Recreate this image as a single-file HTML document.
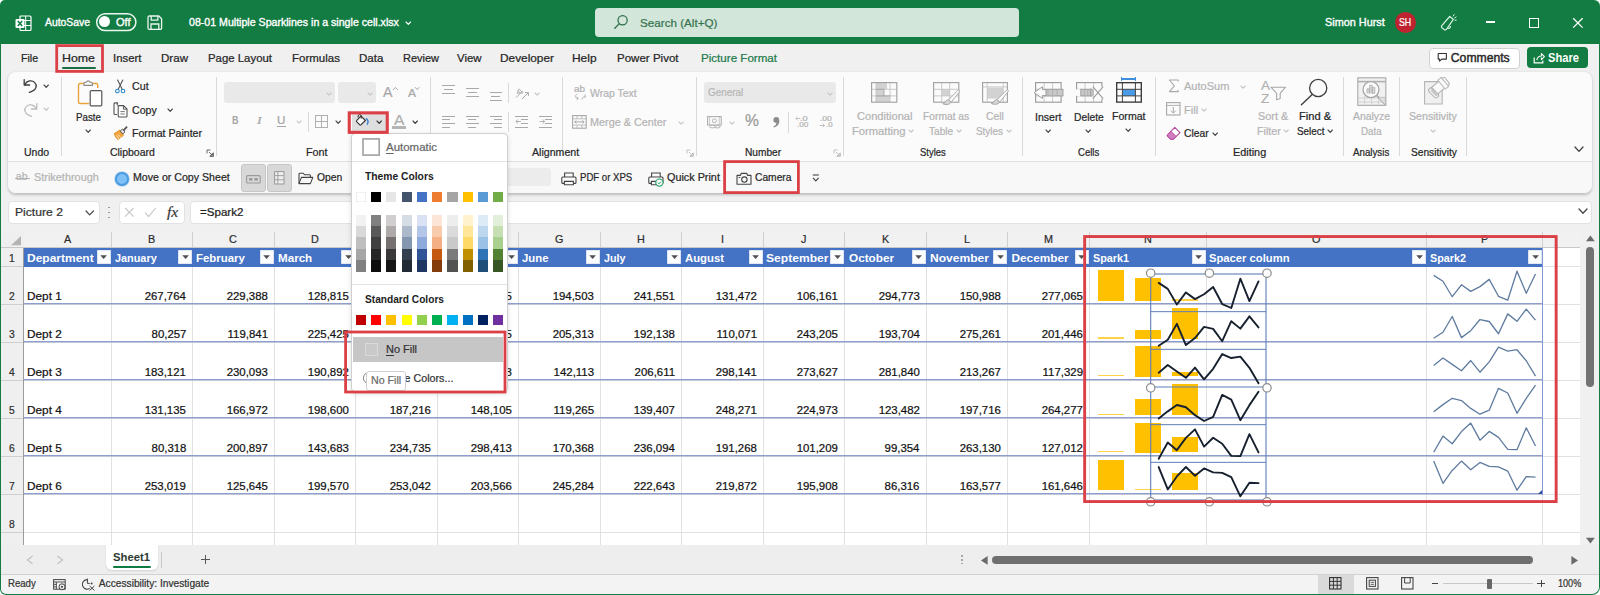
<!DOCTYPE html>
<html lang="en"><head><meta charset="utf-8"><title>Excel - Multiple Sparklines in a single cell</title>
<style>
html,body{margin:0;padding:0;background:#fff;}
body{width:1600px;height:595px;position:relative;overflow:hidden;font-family:"Liberation Sans",sans-serif;}
.a{position:absolute;display:block;}
.t{position:absolute;white-space:nowrap;display:block;-webkit-text-stroke:0.22px currentColor;}
svg{overflow:visible;}
u{text-decoration-thickness:1px;text-underline-offset:1.5px;}
</style></head><body>
<div class="a" style="left:0;top:0;width:1600px;height:595px;background:#127c42;border-radius:5px 6px 8px 6px;"></div>
<div class="a" style="left:1px;top:44px;width:1597.800px;height:549.500px;background:#f0f0f0;border-radius:0 0 7px 5px;"></div>
<svg class="a" style="left:14.6px;top:14.6px;" width="17" height="17" viewBox="0 0 17 17"><rect x="5" y="1" width="11" height="14.5" rx="1" fill="none" stroke="#fff" stroke-width="1.2"/>
<path d="M5.5 5.5H16M5.5 10.5H16M10.7 1v14" stroke="#fff" stroke-width="1"/>
<rect x="0.5" y="4" width="9" height="9" rx="1" fill="#fff"/>
<path d="M2.8 6 L7.2 11 M7.2 6 L2.8 11" stroke="#127c42" stroke-width="1.5"/></svg>
<span class="t" style="top:17.11px;font-size:10.5px;line-height:10.5px;color:#fff;left:44.6px;transform-origin:0 0;transform:scaleX(0.988);-webkit-text-stroke:0.35px #fff;">AutoSave</span>
<svg class="a" style="left:95px;top:11.6px;" width="43" height="21" viewBox="0 0 43 21"><rect x="1.700" y="1.700" width="39.200" height="16.900" rx="8.450" fill="none" stroke="#eaf6ef" stroke-width="1.500"/></svg>
<div class="a" style="left:98.600px;top:16.200px;width:11.200px;height:11.200px;background:#fff;border-radius:50%;"></div>
<span class="t" style="top:17.11px;font-size:10.5px;line-height:10.5px;color:#fff;left:116.3px;transform-origin:0 0;transform:scaleX(1.050);-webkit-text-stroke:0.35px #fff;">Off</span>
<svg class="a" style="left:147px;top:15.2px;" width="16" height="16" viewBox="0 0 16 16"><path d="M1 2.300a1.300 1.300 0 0 1 1.300-1.300h9.500L14.600 3.800v9.200a1.300 1.300 0 0 1-1.300 1.300h-11A1.300 1.300 0 0 1 1 13z" fill="none" stroke="#eaf6ef" stroke-width="1.300"/>
<path d="M4.200 1.200v4h6.600V1.200M4 14.200v-5.200h7.800v5.200" fill="none" stroke="#eaf6ef" stroke-width="1.300"/></svg>
<span class="t" style="top:17.11px;font-size:10.5px;line-height:10.5px;color:#fff;left:188.8px;transform-origin:0 0;transform:scaleX(1.010);-webkit-text-stroke:0.35px #fff;">08-01 Multiple Sparklines in a single cell.xlsx</span>
<svg class="a" style="left:404.7px;top:21.1px;" width="6.6" height="4.4" viewBox="0 0 6.6 4.4"><path d="M1 1 L3.3 3.4 L5.6 1" fill="none" stroke="#fff" stroke-width="1.1" stroke-linecap="round" stroke-linejoin="round"/></svg>
<div class="a" style="left:595px;top:8px;width:424px;height:29px;background:#d2e6da;border-radius:4px;"></div>
<svg class="a" style="left:613px;top:14px;" width="16" height="16" viewBox="0 0 16 16"><circle cx="9.6" cy="6.2" r="4.6" fill="none" stroke="#2a6b47" stroke-width="1.2"/><path d="M6.3 9.6 L1.8 14.2" stroke="#2a6b47" stroke-width="1.3" stroke-linecap="round"/></svg>
<span class="t" style="top:17.48px;font-size:11.6px;line-height:11.6px;color:#37734f;left:639.5px;transform-origin:0 0;transform:scaleX(1.006);">Search (Alt+Q)</span>
<span class="t" style="top:17.11px;font-size:10.5px;line-height:10.5px;color:#fff;left:1324.8px;transform-origin:0 0;transform:scaleX(1.035);-webkit-text-stroke:0.35px #fff;">Simon Hurst</span>
<div class="a" style="left:1394.6px;top:11.8px;width:21.6px;height:21.6px;background:#bf2330;border-radius:50%;"></div>
<span class="t" style="top:16.91px;font-size:10.5px;line-height:10.5px;color:#fff;left:1399.2px;transform-origin:0 0;transform:scaleX(0.836);">SH</span>
<svg class="a" style="left:1440px;top:13px;" width="18" height="19" viewBox="0 0 18 19"><path d="M9.700 3.500 L13.300 6.300 L6.400 16.500 Q5.200 17.300 4 16.400 L1.900 14.700 Q1 13.600 1.800 12.600 Z" fill="none" stroke="#d9f5e4" stroke-width="1.200" stroke-linejoin="round"/>
<path d="M7.600 14.800 a1.600 1.600 0 0 0 2.600 -1.800" fill="none" stroke="#d9f5e4" stroke-width="1.100"/>
<path d="M13.300 3l.9-1.500M14.800 4.800l1.300-.8M14.900 7.200h1.300" stroke="#d9f5e4" stroke-width="1" stroke-linecap="round"/></svg>
<div class="a" style="left:1485.8px;top:21.4px;width:9.4px;height:1.2px;background:#fff;"></div>
<div class="a" style="left:1529.4px;top:18.2px;width:8px;height:8px;border:1.2px solid #fff;"></div>
<svg class="a" style="left:1572px;top:17px;" width="12" height="12" viewBox="0 0 12 12"><path d="M1.2 1.2L10.6 10.6M10.6 1.2L1.2 10.6" stroke="#fff" stroke-width="1.3"/></svg>
<span class="t" style="top:52.81px;font-size:10.5px;line-height:10.5px;color:#262626;left:20.7px;transform-origin:0 0;transform:scaleX(1.011);">File</span>
<span class="t" style="top:52.81px;font-size:10.5px;line-height:10.5px;color:#262626;left:62.3px;transform-origin:0 0;transform:scaleX(1.178);">Home</span>
<span class="t" style="top:52.81px;font-size:10.5px;line-height:10.5px;color:#262626;left:113.4px;transform-origin:0 0;transform:scaleX(1.085);">Insert</span>
<span class="t" style="top:52.81px;font-size:10.5px;line-height:10.5px;color:#262626;left:161.3px;transform-origin:0 0;transform:scaleX(1.102);">Draw</span>
<span class="t" style="top:52.81px;font-size:10.5px;line-height:10.5px;color:#262626;left:208.2px;transform-origin:0 0;transform:scaleX(1.085);">Page Layout</span>
<span class="t" style="top:52.81px;font-size:10.5px;line-height:10.5px;color:#262626;left:292.4px;transform-origin:0 0;transform:scaleX(1.095);">Formulas</span>
<span class="t" style="top:52.81px;font-size:10.5px;line-height:10.5px;color:#262626;left:359.2px;transform-origin:0 0;transform:scaleX(1.100);">Data</span>
<span class="t" style="top:52.81px;font-size:10.5px;line-height:10.5px;color:#262626;left:403px;transform-origin:0 0;transform:scaleX(1.046);">Review</span>
<span class="t" style="top:52.81px;font-size:10.5px;line-height:10.5px;color:#262626;left:457px;transform-origin:0 0;transform:scaleX(1.086);">View</span>
<span class="t" style="top:52.81px;font-size:10.5px;line-height:10.5px;color:#262626;left:499.5px;transform-origin:0 0;transform:scaleX(1.128);">Developer</span>
<span class="t" style="top:52.81px;font-size:10.5px;line-height:10.5px;color:#262626;left:572px;transform-origin:0 0;transform:scaleX(1.135);">Help</span>
<span class="t" style="top:52.81px;font-size:10.5px;line-height:10.5px;color:#262626;left:616.5px;transform-origin:0 0;transform:scaleX(1.098);">Power Pivot</span>
<span class="t" style="top:52.81px;font-size:10.5px;line-height:10.5px;color:#237a4b;left:700.5px;transform-origin:0 0;transform:scaleX(1.104);">Picture Format</span>
<div class="a" style="left:61.8px;top:66.9px;width:34px;height:1.9px;background:#1b6e42;border-radius:1px;"></div>
<div class="a" style="left:1429.4px;top:47.6px;width:88.4px;height:19.6px;background:#fff;border:1px solid #d1d1d1;border-radius:4px;"></div>
<svg class="a" style="left:1436.5px;top:52px;" width="11" height="11" viewBox="0 0 11 11"><path d="M1.2 1.5h8.2v5.6H4.8L2.6 9.2V7.1H1.2z" fill="none" stroke="#333" stroke-width="1.1" stroke-linejoin="round"/></svg>
<span class="t" style="top:52.07px;font-size:12.2px;line-height:12.2px;color:#2a2a2a;left:1450.8px;transform-origin:0 0;-webkit-text-stroke:0.45px #2a2a2a;">Comments</span>
<div class="a" style="left:1527px;top:47.4px;width:61.2px;height:21px;background:#127c42;border-radius:4px;"></div>
<svg class="a" style="left:1533.2px;top:51.6px;" width="12" height="12" viewBox="0 0 12 12"><path d="M1.200 5.400v5.400h8.600V8.600" fill="none" stroke="#fff" stroke-width="1.200"/><path d="M3.800 8.200c.4-2.800 2.200-4.200 4.600-4.200V1.600L11.400 4.600 8.400 7.600V5.600" fill="none" stroke="#fff" stroke-width="1.100" stroke-linejoin="round"/></svg>
<span class="t" style="top:52.07px;font-size:12.2px;line-height:12.2px;color:#fff;font-weight:700;-webkit-text-stroke:0;left:1548.3px;transform-origin:0 0;transform:scaleX(0.914);">Share</span>
<div class="a" style="left:8px;top:72px;width:1584px;height:121.4px;background:#fbfbfb;border-radius:8px;box-shadow:0 1.5px 3px rgba(0,0,0,0.22);"></div>
<div class="a" style="left:8px;top:161.8px;width:1584px;height:31.6px;background:#f8f8f8;border-radius:0 0 8px 8px;"></div>
<div class="a" style="left:8px;top:161px;width:1584px;height:1px;background:#dedede;"></div>
<svg class="a" style="left:22px;top:78px;" width="17" height="16" viewBox="0 0 17 16"><path d="M2.2 1.6v5.4h5.4" fill="none" stroke="#3b3b3b" stroke-width="1.3" stroke-linecap="round" stroke-linejoin="round"/><path d="M2.6 6.6 C5 2.6 9.8 1.6 12.6 4.4 C15.4 7.2 14.4 11.4 10.4 13.2 L7.4 14.4" fill="none" stroke="#3b3b3b" stroke-width="1.3" stroke-linecap="round"/></svg>
<svg class="a" style="left:42.8px;top:84.45px;" width="6.4" height="4.3" viewBox="0 0 6.4 4.3"><path d="M1 1 L3.2 3.3 L5.4 1" fill="none" stroke="#444" stroke-width="1.1" stroke-linecap="round" stroke-linejoin="round"/></svg>
<svg class="a" style="left:22px;top:101.5px;" width="17" height="16" viewBox="0 0 17 16"><path d="M14.8 1.6v5.4H9.4" fill="none" stroke="#bdbdbd" stroke-width="1.3" stroke-linecap="round" stroke-linejoin="round"/><path d="M14.4 6.6 C12 2.6 7.2 1.6 4.4 4.4 C1.6 7.2 2.6 11.4 6.6 13.2 L9.6 14.4" fill="none" stroke="#bdbdbd" stroke-width="1.3" stroke-linecap="round"/></svg>
<svg class="a" style="left:42.8px;top:107.45px;" width="6.4" height="4.3" viewBox="0 0 6.4 4.3"><path d="M1 1 L3.2 3.3 L5.4 1" fill="none" stroke="#c4c4c4" stroke-width="1.1" stroke-linecap="round" stroke-linejoin="round"/></svg>
<span class="t" style="top:147.21px;font-size:10.5px;line-height:10.5px;color:#262626;left:24px;transform-origin:0 0;">Undo</span>
<div class="a" style="left:61.2px;top:77px;width:1px;height:78.7px;background:#d9d9d9;"></div>
<svg class="a" style="left:77px;top:78.5px;" width="27" height="29" viewBox="0 0 27 29"><path d="M7 4.5H3a1.5 1.5 0 0 0-1.5 1.5v17A1.5 1.5 0 0 0 3 24.5h9" fill="none" stroke="#e8a33d" stroke-width="1.4"/>
<path d="M16 4.5h3.2a1.5 1.5 0 0 1 1.5 1.5v3" fill="none" stroke="#e8a33d" stroke-width="1.4"/>
<path d="M7 6.4V4.2a1 1 0 0 1 1-1h1.4a1.9 1.9 0 0 1 3.6 0h1.4a1 1 0 0 1 1 1v2.2z" fill="#fbfbfb" stroke="#8a8a8a" stroke-width="1.1"/>
<rect x="13.2" y="11.6" width="11.6" height="15.2" rx="1" fill="#fff" stroke="#555" stroke-width="1.2"/></svg>
<span class="t" style="top:111.71px;font-size:10.5px;line-height:10.5px;color:#262626;left:76.4px;transform-origin:0 0;transform:scaleX(0.927);">Paste</span>
<svg class="a" style="left:84.5px;top:129.15px;" width="6.4" height="4.3" viewBox="0 0 6.4 4.3"><path d="M1 1 L3.2 3.3 L5.4 1" fill="none" stroke="#444" stroke-width="1.1" stroke-linecap="round" stroke-linejoin="round"/></svg>
<svg class="a" style="left:114px;top:79px;" width="13" height="15" viewBox="0 0 13 15"><path d="M3.6 1 L8.2 10.2 M8.8 1 L4.2 10.2" stroke="#555" stroke-width="1.1" stroke-linecap="round"/>
<circle cx="3.4" cy="12" r="1.8" fill="none" stroke="#2d88c8" stroke-width="1.1"/><circle cx="9" cy="12" r="1.8" fill="none" stroke="#2d88c8" stroke-width="1.1"/></svg>
<span class="t" style="top:80.81px;font-size:10.5px;line-height:10.5px;color:#262626;left:131.6px;transform-origin:0 0;transform:scaleX(1.016);">Cut</span>
<svg class="a" style="left:112.5px;top:101.5px;" width="16" height="16" viewBox="0 0 16 16"><path d="M4.2 3.2V1.8a.9.9 0 0 1 .9-.9H1.6M4.4.9H2a1 1 0 0 0-1 1v9.6a1 1 0 0 0 1 1h2" fill="none" stroke="#555" stroke-width="1.1"/>
<path d="M5.2 3.6h5.4l3.4 3.4v7a1 1 0 0 1-1 1H6.2a1 1 0 0 1-1-1z" fill="#fff" stroke="#555" stroke-width="1.1"/><path d="M10.4 3.8V7.2h3.4" fill="none" stroke="#555" stroke-width="1"/>
<path d="M7.4 9.6h4.4M7.4 12h4.4" stroke="#777" stroke-width="1"/></svg>
<span class="t" style="top:104.61px;font-size:10.5px;line-height:10.5px;color:#262626;left:131.6px;transform-origin:0 0;transform:scaleX(1.008);">Copy</span>
<svg class="a" style="left:167.2px;top:107.65px;" width="6.4" height="4.3" viewBox="0 0 6.4 4.3"><path d="M1 1 L3.2 3.3 L5.4 1" fill="none" stroke="#444" stroke-width="1.1" stroke-linecap="round" stroke-linejoin="round"/></svg>
<svg class="a" style="left:113px;top:125.5px;" width="16" height="15" viewBox="0 0 16 15"><path d="M1.2 7.6 L6.4 4.2 L10.6 9.2 L5.2 13.6 C3.4 12.6 2 10.6 1.2 7.6z" fill="#f2a43a" stroke="#d98a1e" stroke-width=".8"/>
<path d="M3.4 9.4l2.6 3.6M5 8.2l2.8 3.4" stroke="#fff" stroke-width=".7"/>
<path d="M7.2 4.8 L9.6 3 L12 6 L9.8 8z" fill="#e8e8e8" stroke="#555" stroke-width=".9"/>
<path d="M10.8 4.2 L13.6 1.2" stroke="#555" stroke-width="1.8" stroke-linecap="round"/></svg>
<span class="t" style="top:128.11px;font-size:10.5px;line-height:10.5px;color:#262626;left:131.6px;transform-origin:0 0;transform:scaleX(1.008);">Format Painter</span>
<span class="t" style="top:147.21px;font-size:10.5px;line-height:10.5px;color:#262626;left:109.9px;transform-origin:0 0;">Clipboard</span>
<svg class="a" style="left:206px;top:149px;" width="8" height="8" viewBox="0 0 8 8"><path d="M1 4.4V1h3.4M7.4 3.6v3.8H3.6" fill="none" stroke="#666" stroke-width="1"/><path d="M3 3l3.2 3.2M6.4 4v2.4H4" fill="none" stroke="#666" stroke-width="1"/></svg>
<div class="a" style="left:215.8px;top:77px;width:1px;height:78.7px;background:#d9d9d9;"></div>
<div class="a" style="left:224.3px;top:82px;width:110.9px;height:21.3px;background:#e9e9e9;border-radius:3px;"></div>
<svg class="a" style="left:326.3px;top:91.5px;" width="6.2" height="4.2" viewBox="0 0 6.2 4.2"><path d="M1 1 L3.1 3.2 L5.2 1" fill="none" stroke="#c8c8c8" stroke-width="1.1" stroke-linecap="round" stroke-linejoin="round"/></svg>
<div class="a" style="left:337.7px;top:82px;width:38.3px;height:21.3px;background:#e9e9e9;border-radius:3px;"></div>
<svg class="a" style="left:367.4px;top:91.5px;" width="6.2" height="4.2" viewBox="0 0 6.2 4.2"><path d="M1 1 L3.1 3.2 L5.2 1" fill="none" stroke="#c8c8c8" stroke-width="1.1" stroke-linecap="round" stroke-linejoin="round"/></svg>
<span class="t" style="top:84.43px;font-size:15.2px;line-height:15.2px;color:#a8a8a8;left:383.1px;transform-origin:0 0;transform:scaleX(0.937);">A</span>
<svg class="a" style="left:392px;top:85.6px;" width="7" height="5" viewBox="0 0 7 5"><path d="M1 4L3.4 1.4L5.8 4" fill="none" stroke="#a8a8a8" stroke-width="1"/></svg>
<span class="t" style="top:88.09px;font-size:11px;line-height:11px;color:#a8a8a8;left:407.6px;transform-origin:0 0;transform:scaleX(1.090);">A</span>
<svg class="a" style="left:414px;top:86px;" width="7" height="5" viewBox="0 0 7 5"><path d="M1 1.2L3.2 3.6L5.4 1.2" fill="none" stroke="#a8a8a8" stroke-width="1"/></svg>
<span class="t" style="top:114.89px;font-size:11px;line-height:11px;color:#a6a6a6;font-weight:700;-webkit-text-stroke:0;left:231.9px;transform-origin:0 0;transform:scaleX(0.818);">B</span>
<span class="t" style="top:114.89px;font-size:11px;line-height:11px;color:#a6a6a6;font-style:italic;left:256.8px;transform-origin:0 0;transform:scaleX(1.243);font-family:'Liberation Serif',serif;">I</span>
<span class="t" style="top:114.63px;font-size:10.6px;line-height:10.6px;color:#a6a6a6;left:277.4px;transform-origin:0 0;transform:scaleX(1.097);">U</span>
<div class="a" style="left:277.2px;top:126.1px;width:8.8px;height:1px;background:#a6a6a6;"></div>
<svg class="a" style="left:295.9px;top:120.3px;" width="6.2" height="4.2" viewBox="0 0 6.2 4.2"><path d="M1 1 L3.1 3.2 L5.2 1" fill="none" stroke="#c8c8c8" stroke-width="1.1" stroke-linecap="round" stroke-linejoin="round"/></svg>
<div class="a" style="left:308.2px;top:111.6px;width:1px;height:20.1px;background:#d9d9d9;"></div>
<svg class="a" style="left:315px;top:115.4px;" width="13" height="13" viewBox="0 0 13 13"><rect x=".5" y=".5" width="12" height="12" fill="none" stroke="#b0b0b0" stroke-width="1"/><path d="M6.5 .5v12M.5 6.5h12" stroke="#b0b0b0" stroke-width="1"/></svg>
<svg class="a" style="left:335.3px;top:120.45px;" width="6.4" height="4.3" viewBox="0 0 6.4 4.3"><path d="M1 1 L3.2 3.3 L5.4 1" fill="none" stroke="#444" stroke-width="1.1" stroke-linecap="round" stroke-linejoin="round"/></svg>
<div class="a" style="left:351.6px;top:113.4px;width:34.4px;height:17.8px;background:#dfdfdf;"></div>
<svg class="a" style="left:355px;top:113.6px;" width="15" height="13" viewBox="0 0 15 13"><path d="M6 2.200 L1.800 6.400 a1.100 1.100 0 0 0 0 1.500 l2.800 2.800 a1.100 1.100 0 0 0 1.500 0 L10.400 6.500 z" fill="#fbfbfb" stroke="#333" stroke-width="1.150" stroke-linejoin="round"/>
<path d="M6.200 4.600 V2 a1.500 1.500 0 0 0 -3 0 v1.600" fill="none" stroke="#333" stroke-width="1"/>
<path d="M11.300 4.600 c1.800 1.600 2.200 3.800 1 5.600" fill="none" stroke="#2b7cd3" stroke-width="1.300" stroke-linecap="round"/></svg>
<svg class="a" style="left:375.6px;top:120.45px;" width="6.4" height="4.3" viewBox="0 0 6.4 4.3"><path d="M1 1 L3.2 3.3 L5.4 1" fill="none" stroke="#333" stroke-width="1.1" stroke-linecap="round" stroke-linejoin="round"/></svg>
<span class="t" style="top:113.28px;font-size:14.2px;line-height:14.2px;color:#adadad;left:394.2px;transform-origin:0 0;transform:scaleX(1.098);">A</span>
<div class="a" style="left:392.2px;top:126.4px;width:14.1px;height:2.3px;background:#b4b4b4;"></div>
<svg class="a" style="left:412.4px;top:120.45px;" width="6.4" height="4.3" viewBox="0 0 6.4 4.3"><path d="M1 1 L3.2 3.3 L5.4 1" fill="none" stroke="#333" stroke-width="1.1" stroke-linecap="round" stroke-linejoin="round"/></svg>
<span class="t" style="top:147.21px;font-size:10.5px;line-height:10.5px;color:#262626;left:305.7px;transform-origin:0 0;transform:scaleX(1.023);">Font</span>
<div class="a" style="left:430px;top:77px;width:1px;height:78.7px;background:#d9d9d9;"></div>
<div class="a" style="left:442.3px;top:85.4px;width:12.6px;height:1px;background:#a9a9a9;"></div>
<div class="a" style="left:444.1px;top:89.2px;width:9px;height:1px;background:#a9a9a9;"></div>
<div class="a" style="left:442.3px;top:92.9px;width:12.6px;height:1px;background:#a9a9a9;"></div>
<div class="a" style="left:466px;top:88.4px;width:12.6px;height:1px;background:#a9a9a9;"></div>
<div class="a" style="left:467.8px;top:92.2px;width:9px;height:1px;background:#a9a9a9;"></div>
<div class="a" style="left:466px;top:96px;width:12.6px;height:1px;background:#a9a9a9;"></div>
<div class="a" style="left:489.5px;top:92.2px;width:12.6px;height:1px;background:#a9a9a9;"></div>
<div class="a" style="left:491.3px;top:96px;width:9px;height:1px;background:#a9a9a9;"></div>
<div class="a" style="left:489.5px;top:99.7px;width:12.6px;height:1px;background:#a9a9a9;"></div>
<div class="a" style="left:508.4px;top:82.6px;width:1px;height:20.2px;background:#d9d9d9;"></div>
<svg class="a" style="left:514px;top:84.5px;" width="17" height="17" viewBox="0 0 17 17"><path d="M2 12.6 L8.6 6" stroke="#a9a9a9" stroke-width="1"/><path d="M3.2 8.2 l1.8-4.4 l4 4z M4 5.6l2.6 2.6" fill="none" stroke="#a9a9a9" stroke-width=".9"/><path d="M8 14l6.4-6.4 M14.4 11V7.6H11" fill="none" stroke="#a9a9a9" stroke-width="1"/></svg>
<svg class="a" style="left:534.3px;top:91.5px;" width="6.2" height="4.2" viewBox="0 0 6.2 4.2"><path d="M1 1 L3.1 3.2 L5.2 1" fill="none" stroke="#c8c8c8" stroke-width="1.1" stroke-linecap="round" stroke-linejoin="round"/></svg>
<div class="a" style="left:442.3px;top:115.6px;width:12.6px;height:1px;background:#a9a9a9;"></div>
<div class="a" style="left:442.3px;top:119.2px;width:8px;height:1px;background:#a9a9a9;"></div>
<div class="a" style="left:442.3px;top:122.9px;width:12.6px;height:1px;background:#a9a9a9;"></div>
<div class="a" style="left:442.3px;top:126.5px;width:8px;height:1px;background:#a9a9a9;"></div>
<div class="a" style="left:466px;top:115.6px;width:12.6px;height:1px;background:#a9a9a9;"></div>
<div class="a" style="left:468.3px;top:119.2px;width:8px;height:1px;background:#a9a9a9;"></div>
<div class="a" style="left:466px;top:122.9px;width:12.6px;height:1px;background:#a9a9a9;"></div>
<div class="a" style="left:468.3px;top:126.5px;width:8px;height:1px;background:#a9a9a9;"></div>
<div class="a" style="left:489.5px;top:115.6px;width:12.6px;height:1px;background:#a9a9a9;"></div>
<div class="a" style="left:494.1px;top:119.2px;width:8px;height:1px;background:#a9a9a9;"></div>
<div class="a" style="left:489.5px;top:122.9px;width:12.6px;height:1px;background:#a9a9a9;"></div>
<div class="a" style="left:494.1px;top:126.5px;width:8px;height:1px;background:#a9a9a9;"></div>
<div class="a" style="left:508.4px;top:111.6px;width:1px;height:20.1px;background:#d9d9d9;"></div>
<div class="a" style="left:515.4px;top:115.6px;width:13px;height:1px;background:#a9a9a9;"></div>
<div class="a" style="left:515.4px;top:126.5px;width:13px;height:1px;background:#a9a9a9;"></div>
<div class="a" style="left:521.4px;top:119.2px;width:7px;height:1px;background:#a9a9a9;"></div>
<div class="a" style="left:521.4px;top:122.9px;width:7px;height:1px;background:#a9a9a9;"></div>
<svg class="a" style="left:514.9px;top:118px;" width="7" height="7" viewBox="0 0 7 7"><path d="M6 3.5H1M3 1.4L.9 3.5L3 5.6" fill="none" stroke="#a9a9a9" stroke-width=".9"/></svg>
<div class="a" style="left:539px;top:115.6px;width:13px;height:1px;background:#a9a9a9;"></div>
<div class="a" style="left:539px;top:126.5px;width:13px;height:1px;background:#a9a9a9;"></div>
<div class="a" style="left:545px;top:119.2px;width:7px;height:1px;background:#a9a9a9;"></div>
<div class="a" style="left:545px;top:122.9px;width:7px;height:1px;background:#a9a9a9;"></div>
<svg class="a" style="left:538.5px;top:118px;" width="7" height="7" viewBox="0 0 7 7"><path d="M.6 3.5H5.6M3.6 1.4L5.7 3.5L3.6 5.6" fill="none" stroke="#a9a9a9" stroke-width=".9"/></svg>
<div class="a" style="left:562.1px;top:77px;width:1px;height:78.7px;background:#d9d9d9;"></div>
<span class="t" style="top:84.27px;font-size:9.6px;line-height:9.6px;color:#b0b0b0;left:574.4px;transform-origin:0 0;transform:scaleX(1.030);">ab</span>
<svg class="a" style="left:573.5px;top:93px;" width="14" height="8" viewBox="0 0 14 8"><path d="M3.4 1.2 C.6 1.6 .8 5.6 4 5.4 M2.6 3.6L4.4 5.4L2.6 7.2" fill="none" stroke="#b0b0b0" stroke-width=".9"/><path d="M7.6 6.6c1.6-2 1.6-3.6 4-3.4 M10.4 1.6l1.6 1.6-1.8 1.6" fill="none" stroke="#b0b0b0" stroke-width=".9"/></svg>
<span class="t" style="top:88.31px;font-size:10.5px;line-height:10.5px;color:#b4b4b4;left:590.3px;transform-origin:0 0;transform:scaleX(0.994);">Wrap Text</span>
<svg class="a" style="left:571.8px;top:115.2px;" width="15" height="14" viewBox="0 0 15 14"><rect x=".6" y=".6" width="13.6" height="12.6" fill="none" stroke="#a8a8a8" stroke-width="1.1"/><path d="M.6 3.8h13.6M.6 10h13.6M5 .6v3.2M9.8 .6v3.2M5 10v3.2M9.8 10v3.2" stroke="#b8b8b8" stroke-width=".9"/><path d="M2.6 6.9h9.6M4.4 5.4L2.8 6.9l1.6 1.5M10.4 5.4L12 6.9l-1.6 1.5" fill="none" stroke="#a0a0a0" stroke-width=".9"/></svg>
<span class="t" style="top:117.31px;font-size:10.5px;line-height:10.5px;color:#b4b4b4;left:590.3px;transform-origin:0 0;transform:scaleX(1.031);">Merge &amp; Center</span>
<svg class="a" style="left:677.9px;top:120.5px;" width="6.2" height="4.2" viewBox="0 0 6.2 4.2"><path d="M1 1 L3.1 3.2 L5.2 1" fill="none" stroke="#c8c8c8" stroke-width="1.1" stroke-linecap="round" stroke-linejoin="round"/></svg>
<span class="t" style="top:147.21px;font-size:10.5px;line-height:10.5px;color:#262626;left:532.3px;transform-origin:0 0;transform:scaleX(1.011);">Alignment</span>
<svg class="a" style="left:686px;top:149px;" width="8" height="8" viewBox="0 0 8 8"><path d="M1 4.4V1h3.4M7.4 3.6v3.8H3.6" fill="none" stroke="#c0c0c0" stroke-width="1"/><path d="M3 3l3.2 3.2M6.4 4v2.4H4" fill="none" stroke="#c0c0c0" stroke-width="1"/></svg>
<div class="a" style="left:696.4px;top:77px;width:1px;height:78.7px;background:#d9d9d9;"></div>
<div class="a" style="left:704.2px;top:82px;width:131.4px;height:21.3px;background:#e9e9e9;border-radius:3px;"></div>
<span class="t" style="top:87.77px;font-size:10.2px;line-height:10.2px;color:#b6b6b6;left:707.5px;transform-origin:0 0;transform:scaleX(0.973);">General</span>
<svg class="a" style="left:826.6px;top:91.5px;" width="6.2" height="4.2" viewBox="0 0 6.2 4.2"><path d="M1 1 L3.1 3.2 L5.2 1" fill="none" stroke="#c8c8c8" stroke-width="1.1" stroke-linecap="round" stroke-linejoin="round"/></svg>
<svg class="a" style="left:707.4px;top:116.4px;" width="15" height="12.6" viewBox="0 0 15 12.6"><rect x=".6" y=".6" width="13.6" height="8.4" fill="none" stroke="#a8a8a8" stroke-width="1"/><circle cx="7.4" cy="4.8" r="2" fill="none" stroke="#a8a8a8" stroke-width=".9"/><path d="M2.6.6v8.4M12.2.6v8.4" stroke="#b8b8b8" stroke-width=".8"/><ellipse cx="5.6" cy="10.6" rx="3" ry="1.3" fill="#fbfbfb" stroke="#a8a8a8" stroke-width=".9"/><ellipse cx="10.6" cy="10.8" rx="2.6" ry="1.2" fill="#fbfbfb" stroke="#a8a8a8" stroke-width=".9"/></svg>
<svg class="a" style="left:728.8px;top:120.5px;" width="6.2" height="4.2" viewBox="0 0 6.2 4.2"><path d="M1 1 L3.1 3.2 L5.2 1" fill="none" stroke="#c8c8c8" stroke-width="1.1" stroke-linecap="round" stroke-linejoin="round"/></svg>
<span class="t" style="top:113.46px;font-size:16px;line-height:16px;color:#9a9a9a;left:744.8px;transform-origin:0 0;transform:scaleX(0.977);">%</span>
<svg class="a" style="left:771px;top:116px;" width="10" height="13" viewBox="0 0 10 13"><circle cx="5.300" cy="3.900" r="2.900" fill="#8c8c8c"/><path d="M8.200 3.900 c.5 3.700 -1.600 6.500 -5.500 7.600 l-.4 -.8 c2.300 -1.100 3.300 -2.500 3.100 -4.400z" fill="#8c8c8c"/></svg>
<div class="a" style="left:788.2px;top:111.6px;width:1px;height:21.4px;background:#d9d9d9;"></div>
<span class="t" style="top:114.74px;font-size:7.4px;line-height:7.4px;color:#b4b4b4;left:800px;transform-origin:0 0;transform:scaleX(1.232);">.0</span>
<span class="t" style="top:121.34px;font-size:7.4px;line-height:7.4px;color:#b4b4b4;left:797px;transform-origin:0 0;transform:scaleX(1.108);">.00</span>
<svg class="a" style="left:795px;top:116px;" width="6" height="5" viewBox="0 0 6 5"><path d="M5.4 2.5H.8M2.6.8L.8 2.5l1.8 1.7" fill="none" stroke="#b4b4b4" stroke-width=".8"/></svg>
<span class="t" style="top:114.74px;font-size:7.4px;line-height:7.4px;color:#b4b4b4;left:820px;transform-origin:0 0;transform:scaleX(1.147);">.00</span>
<span class="t" style="top:121.34px;font-size:7.4px;line-height:7.4px;color:#b4b4b4;left:826px;transform-origin:0 0;transform:scaleX(1.070);">.0</span>
<svg class="a" style="left:818.6px;top:123px;" width="7" height="5" viewBox="0 0 7 5"><path d="M.6 2.5h5M3.8.8l1.8 1.7-1.8 1.7" fill="none" stroke="#b4b4b4" stroke-width=".8"/></svg>
<span class="t" style="top:147.21px;font-size:10.5px;line-height:10.5px;color:#262626;left:744.5px;transform-origin:0 0;transform:scaleX(0.967);">Number</span>
<svg class="a" style="left:832.8px;top:149px;" width="8" height="8" viewBox="0 0 8 8"><path d="M1 4.4V1h3.4M7.4 3.6v3.8H3.6" fill="none" stroke="#c0c0c0" stroke-width="1"/><path d="M3 3l3.2 3.2M6.4 4v2.4H4" fill="none" stroke="#c0c0c0" stroke-width="1"/></svg>
<div class="a" style="left:842.9px;top:77px;width:1px;height:78.7px;background:#d9d9d9;"></div>
<svg class="a" style="left:871px;top:81.6px;" width="34" height="30" viewBox="0 0 34 30"><rect x=".6" y=".6" width="25.2" height="19.600" fill="#fbfbfb"/><rect x="5" y="1" width="11" height="6" fill="#d2d2d2"/><rect x="5" y="7.400" width="8" height="6.400" fill="#d2d2d2"/><rect x="5" y="14" width="14" height="6" fill="#d2d2d2"/><path d="M.6 7.300h25.200M.6 13.900h25.200M5 .6v19.600M19 .6v19.600" stroke="#c4c4c4" stroke-width=".9" fill="none"/><path d="M5 7.300h8M13 7.300v6.600M5 13.900h14" stroke="#a3a3a3" stroke-width=".9" fill="none"/><rect x=".6" y=".6" width="25.200" height="19.600" fill="none" stroke="#a3a3a3" stroke-width="1.150"/></svg>
<span class="t" style="top:111.01px;font-size:10.5px;line-height:10.5px;color:#b4b4b4;left:856.7px;transform-origin:0 0;transform:scaleX(1.056);">Conditional</span>
<span class="t" style="top:125.61px;font-size:10.5px;line-height:10.5px;color:#b4b4b4;left:852.4px;transform-origin:0 0;transform:scaleX(1.066);">Formatting</span>
<svg class="a" style="left:908.3px;top:129.3px;" width="6.2" height="4.2" viewBox="0 0 6.2 4.2"><path d="M1 1 L3.1 3.2 L5.2 1" fill="none" stroke="#c4c4c4" stroke-width="1.1" stroke-linecap="round" stroke-linejoin="round"/></svg>
<svg class="a" style="left:932.8px;top:81.6px;" width="34" height="30" viewBox="0 0 34 30"><rect x=".6" y=".6" width="25.200" height="19.600" fill="#fbfbfb"/><rect x="8.700" y="7.300" width="8" height="6.600" fill="#d2d2d2"/><path d="M.6 7.300h25.200M.6 13.900h25.200M8.700 .6v19.600M16.700 .6v19.600" stroke="#c4c4c4" stroke-width=".9" fill="none"/><rect x=".6" y=".6" width="25.200" height="19.600" fill="none" stroke="#a3a3a3" stroke-width="1.150"/><g transform="translate(9.2 7.4)"><path d="M6.200 10.600 L15.600 1 a1.100 1.100 0 0 1 1.700 1.400 L9 12.800z" fill="#fbfbfb" stroke="#a3a3a3" stroke-width=".9"/><path d="M6.300 10.500 c-1.800 -.2 -2.900 .9 -3.300 2.100 -.4 1.100 -1.200 1.500 -2.400 1.700 2.400 1.400 6.600 1.200 8.400 -1.400z" fill="#d6d6d6" stroke="#a3a3a3" stroke-width=".9"/></g></svg>
<span class="t" style="top:111.01px;font-size:10.5px;line-height:10.5px;color:#b4b4b4;left:922.7px;transform-origin:0 0;transform:scaleX(0.978);">Format as</span>
<span class="t" style="top:125.61px;font-size:10.5px;line-height:10.5px;color:#b4b4b4;left:929px;transform-origin:0 0;transform:scaleX(0.964);">Table</span>
<svg class="a" style="left:955.7px;top:129.3px;" width="6.2" height="4.2" viewBox="0 0 6.2 4.2"><path d="M1 1 L3.1 3.2 L5.2 1" fill="none" stroke="#c4c4c4" stroke-width="1.1" stroke-linecap="round" stroke-linejoin="round"/></svg>
<svg class="a" style="left:981.8px;top:81.6px;" width="34" height="30" viewBox="0 0 34 30"><rect x=".6" y=".6" width="24.800" height="19.600" fill="#fbfbfb"/><rect x="5.200" y="5.600" width="16" height="11" fill="#d2d2d2"/><path d="M.6 4.900h24.800M5.200 .6v19.600M21.200 .6v19.600" stroke="#c4c4c4" stroke-width=".9" fill="none"/><rect x=".6" y=".6" width="24.800" height="19.600" fill="none" stroke="#a3a3a3" stroke-width="1.150"/><g transform="translate(8.8 7.2)"><path d="M6.200 10.600 L15.600 1 a1.100 1.100 0 0 1 1.700 1.400 L9 12.800z" fill="#fbfbfb" stroke="#a3a3a3" stroke-width=".9"/><path d="M6.300 10.500 c-1.800 -.2 -2.900 .9 -3.300 2.100 -.4 1.100 -1.200 1.500 -2.400 1.700 2.400 1.400 6.600 1.200 8.400 -1.400z" fill="#d6d6d6" stroke="#a3a3a3" stroke-width=".9"/></g></svg>
<span class="t" style="top:111.01px;font-size:10.5px;line-height:10.5px;color:#b4b4b4;left:986px;transform-origin:0 0;transform:scaleX(0.979);">Cell</span>
<span class="t" style="top:125.61px;font-size:10.5px;line-height:10.5px;color:#b4b4b4;left:976px;transform-origin:0 0;transform:scaleX(0.944);">Styles</span>
<svg class="a" style="left:1005.6px;top:129.3px;" width="6.2" height="4.2" viewBox="0 0 6.2 4.2"><path d="M1 1 L3.1 3.2 L5.2 1" fill="none" stroke="#c4c4c4" stroke-width="1.1" stroke-linecap="round" stroke-linejoin="round"/></svg>
<span class="t" style="top:147.21px;font-size:10.5px;line-height:10.5px;color:#262626;left:919.7px;transform-origin:0 0;transform:scaleX(0.899);">Styles</span>
<div class="a" style="left:1021.8px;top:77px;width:1px;height:78.7px;background:#d9d9d9;"></div>
<svg class="a" style="left:1035.4px;top:81.6px;" width="34" height="30" viewBox="0 0 34 30"><rect x=".6" y=".6" width="25.500" height="19.600" fill="#fbfbfb"/><path d="M.6 7.300h25.500M.6 13.900h25.500M9.100 .6v19.600M17.600 .6v19.600" stroke="#c4c4c4" stroke-width=".9" fill="none"/><rect x=".6" y=".6" width="25.500" height="19.600" fill="none" stroke="#9c9c9c" stroke-width="1.150"/><rect x="9" y="7.300" width="19" height="6.600" fill="#c9c9c9" stroke="#9c9c9c" stroke-width=".9"/><path d="M13 7.300v6.600M17.600 7.300v6.600M22 7.300v6.600" stroke="#aaa" stroke-width=".8"/><path d="M7.400 4.800 L-.9 10.600 L7.400 16.400 V13.600 H11 V7.600 H7.400z" fill="#fbfbfb" stroke="#9c9c9c" stroke-width="1" stroke-linejoin="round"/></svg>
<span class="t" style="top:111.81px;font-size:10.5px;line-height:10.5px;color:#262626;left:1035px;transform-origin:0 0;transform:scaleX(1.005);">Insert</span>
<svg class="a" style="left:1045.1px;top:129.15px;" width="6.4" height="4.3" viewBox="0 0 6.4 4.3"><path d="M1 1 L3.2 3.3 L5.4 1" fill="none" stroke="#444" stroke-width="1.1" stroke-linecap="round" stroke-linejoin="round"/></svg>
<svg class="a" style="left:1075.6px;top:81.6px;" width="34" height="30" viewBox="0 0 34 30"><rect x=".6" y=".6" width="25.300" height="19.600" fill="#fbfbfb"/><path d="M.6 7.300h25.300M.6 13.900h25.300M9.100 .6v19.600M17.600 .6v19.600" stroke="#c4c4c4" stroke-width=".9" fill="none"/><rect x=".6" y=".6" width="25.300" height="19.600" fill="none" stroke="#9c9c9c" stroke-width="1.150"/><rect x="-.4" y="7.300" width="5" height="6.600" fill="#fbfbfb"/><rect x="4.800" y="7.300" width="10" height="6.600" fill="#c9c9c9" stroke="#9c9c9c" stroke-width=".9"/><path d="M8.400 7.300v6.600M11.800 7.300v6.600" stroke="#aaa" stroke-width=".8"/><path d="M14.800 6.600l4.200 4-4.200 4z" fill="#c4c4c4" stroke="#9c9c9c" stroke-width=".7"/><rect x="18" y="4.600" width="9.500" height="12" fill="#fbfbfb"/><path d="M16.800 4.600l10.400 12M27.200 4.600l-10.400 12" stroke="#9c9c9c" stroke-width="1.100"/></svg>
<span class="t" style="top:111.81px;font-size:10.5px;line-height:10.5px;color:#262626;left:1073.5px;transform-origin:0 0;transform:scaleX(0.979);">Delete</span>
<svg class="a" style="left:1084.8px;top:129.15px;" width="6.4" height="4.3" viewBox="0 0 6.4 4.3"><path d="M1 1 L3.2 3.3 L5.4 1" fill="none" stroke="#444" stroke-width="1.1" stroke-linecap="round" stroke-linejoin="round"/></svg>
<svg class="a" style="left:1115.6px;top:81.6px;" width="34" height="30" viewBox="0 0 34 30"><rect x=".7" y=".7" width="24.600" height="19.400" fill="#fbfbfb"/><rect x="6.400" y="7.300" width="13" height="6.600" fill="#4a9ce8"/><path d="M.7 7.300h24.600M.7 13.900h24.600M6.400 .7v19.400M19.400 .7v19.400" stroke="#444" stroke-width="1" fill="none"/><rect x=".7" y=".7" width="24.600" height="19.400" fill="none" stroke="#333" stroke-width="1.300"/></svg>
<div class="a" style="left:1121px;top:78px;width:14.8px;height:1.8px;background:#3f8fdd;"></div>
<div class="a" style="left:1120.8px;top:76.8px;width:1px;height:4.2px;background:#3f8fdd;"></div>
<div class="a" style="left:1135px;top:76.8px;width:1px;height:4.2px;background:#3f8fdd;"></div>
<span class="t" style="top:111.01px;font-size:10.5px;line-height:10.5px;color:#262626;left:1111.8px;transform-origin:0 0;transform:scaleX(1.008);">Format</span>
<svg class="a" style="left:1124.5px;top:128.45px;" width="6.4" height="4.3" viewBox="0 0 6.4 4.3"><path d="M1 1 L3.2 3.3 L5.4 1" fill="none" stroke="#444" stroke-width="1.1" stroke-linecap="round" stroke-linejoin="round"/></svg>
<span class="t" style="top:147.21px;font-size:10.5px;line-height:10.5px;color:#262626;left:1078px;transform-origin:0 0;transform:scaleX(0.908);">Cells</span>
<div class="a" style="left:1154.9px;top:77px;width:1px;height:78.7px;background:#d9d9d9;"></div>
<svg class="a" style="left:1167.6px;top:79px;" width="12" height="14" viewBox="0 0 12 14"><path d="M10.2 2.6V1H1.4l5 5.8-5 5.8h8.8v-1.6" fill="none" stroke="#a8a8a8" stroke-width="1.1" stroke-linejoin="round"/></svg>
<span class="t" style="top:80.81px;font-size:10.5px;line-height:10.5px;color:#b4b4b4;left:1184.4px;transform-origin:0 0;transform:scaleX(1.049);">AutoSum</span>
<svg class="a" style="left:1240.3px;top:84.5px;" width="6.2" height="4.2" viewBox="0 0 6.2 4.2"><path d="M1 1 L3.1 3.2 L5.2 1" fill="none" stroke="#c4c4c4" stroke-width="1.1" stroke-linecap="round" stroke-linejoin="round"/></svg>
<svg class="a" style="left:1166.4px;top:102.4px;" width="15" height="14" viewBox="0 0 15 14"><rect x=".6" y=".6" width="13.4" height="12.4" fill="none" stroke="#a8a8a8" stroke-width="1.1"/><path d="M.6 3.4h13.4" stroke="#a8a8a8" stroke-width=".9"/><path d="M7.3 5v6M4.8 8.6l2.5 2.5 2.5-2.5" fill="none" stroke="#a8a8a8" stroke-width="1"/></svg>
<span class="t" style="top:104.61px;font-size:10.5px;line-height:10.5px;color:#b4b4b4;left:1184.4px;transform-origin:0 0;transform:scaleX(1.051);">Fill</span>
<svg class="a" style="left:1200.9px;top:108.3px;" width="6.2" height="4.2" viewBox="0 0 6.2 4.2"><path d="M1 1 L3.1 3.2 L5.2 1" fill="none" stroke="#c4c4c4" stroke-width="1.1" stroke-linecap="round" stroke-linejoin="round"/></svg>
<svg class="a" style="left:1166px;top:125.5px;" width="16" height="15" viewBox="0 0 16 15"><path d="M8.8 1.4 L14 6.6 L7.4 13.2 H4.6 L1.6 10.2 a1 1 0 0 1 0-1.4z" fill="#fff" stroke="#b4489c" stroke-width="1.1" stroke-linejoin="round"/><path d="M4.9 5.3 L10.1 10.5 L7.4 13.2 H4.6 L1.6 10.2 a1 1 0 0 1 0-1.4z" fill="#d27cc2" stroke="#b4489c" stroke-width="1" stroke-linejoin="round"/></svg>
<span class="t" style="top:128.11px;font-size:10.5px;line-height:10.5px;color:#262626;left:1184.4px;transform-origin:0 0;transform:scaleX(0.980);">Clear</span>
<svg class="a" style="left:1211.8px;top:131.65px;" width="6.4" height="4.3" viewBox="0 0 6.4 4.3"><path d="M1 1 L3.2 3.3 L5.4 1" fill="none" stroke="#444" stroke-width="1.1" stroke-linecap="round" stroke-linejoin="round"/></svg>
<span class="t" style="top:79px;font-size:13px;line-height:13px;color:#b0b0b0;left:1261px;transform-origin:0 0;transform:scaleX(1.038);">A</span>
<span class="t" style="top:91.8px;font-size:13px;line-height:13px;color:#b0b0b0;left:1261.4px;transform-origin:0 0;transform:scaleX(1.033);">Z</span>
<svg class="a" style="left:1270px;top:86px;" width="17" height="15" viewBox="0 0 17 15"><path d="M1 1.2h14.6l-5.4 6.2v5l-3.6 1.4V7.4z" fill="none" stroke="#a8a8a8" stroke-width="1.1" stroke-linejoin="round"/></svg>
<span class="t" style="top:111.01px;font-size:10.5px;line-height:10.5px;color:#b4b4b4;left:1258px;transform-origin:0 0;transform:scaleX(1.035);">Sort &amp;</span>
<span class="t" style="top:125.61px;font-size:10.5px;line-height:10.5px;color:#b4b4b4;left:1256.7px;transform-origin:0 0;transform:scaleX(1.024);">Filter</span>
<svg class="a" style="left:1282.6px;top:129.3px;" width="6.2" height="4.2" viewBox="0 0 6.2 4.2"><path d="M1 1 L3.1 3.2 L5.2 1" fill="none" stroke="#c4c4c4" stroke-width="1.1" stroke-linecap="round" stroke-linejoin="round"/></svg>
<svg class="a" style="left:1300px;top:78px;" width="29" height="28" viewBox="0 0 29 28"><circle cx="18.2" cy="10" r="8.6" fill="none" stroke="#3f3f3f" stroke-width="1.3"/><path d="M12.2 16.4 L1.4 26.8" stroke="#3f3f3f" stroke-width="1.4" stroke-linecap="round"/></svg>
<span class="t" style="top:111.01px;font-size:10.5px;line-height:10.5px;color:#262626;left:1298.8px;transform-origin:0 0;transform:scaleX(1.061);">Find &amp;</span>
<span class="t" style="top:125.61px;font-size:10.5px;line-height:10.5px;color:#262626;left:1296.5px;transform-origin:0 0;transform:scaleX(0.942);">Select</span>
<svg class="a" style="left:1326.6px;top:129.25px;" width="6.4" height="4.3" viewBox="0 0 6.4 4.3"><path d="M1 1 L3.2 3.3 L5.4 1" fill="none" stroke="#444" stroke-width="1.1" stroke-linecap="round" stroke-linejoin="round"/></svg>
<span class="t" style="top:147.21px;font-size:10.5px;line-height:10.5px;color:#262626;left:1232.8px;transform-origin:0 0;transform:scaleX(1.034);">Editing</span>
<div class="a" style="left:1343.2px;top:77px;width:1px;height:78.7px;background:#d9d9d9;"></div>
<svg class="a" style="left:1357px;top:77.4px;" width="30" height="30" viewBox="0 0 30 30"><rect x=".8" y=".8" width="28" height="27.6" fill="#f1f1f1" stroke="#b0b0b0" stroke-width="1.2"/>
<path d="M.8 4.6h28" stroke="#b0b0b0" stroke-width="1.6"/>
<path d="M.8 21h28M.8 25h28M7.6 19v9.4M14.6 19v9.4M21.6 19v9.4" stroke="#cfcfcf" stroke-width=".9"/>
<circle cx="14" cy="12.6" r="8" fill="#fbfbfb" stroke="#a8a8a8" stroke-width="1.3"/>
<path d="M10 16.4v-4.6h2.4v4.6M12.6 16.4V8.2h2.6v8.2M15.4 16.4v-6h2.4v6z" fill="#d6d6d6" stroke="#b0b0b0" stroke-width=".8"/>
<path d="M19.6 18.4 L28 27.4" stroke="#a8a8a8" stroke-width="1.6"/><path d="M21 20.4l7.4 0 0 7.6z" fill="#e0e0e0" stroke="#b0b0b0" stroke-width=".7"/></svg>
<span class="t" style="top:111.01px;font-size:10.5px;line-height:10.5px;color:#b4b4b4;left:1353.2px;transform-origin:0 0;transform:scaleX(0.993);">Analyze</span>
<span class="t" style="top:125.61px;font-size:10.5px;line-height:10.5px;color:#b4b4b4;left:1361.3px;transform-origin:0 0;transform:scaleX(0.933);">Data</span>
<span class="t" style="top:147.21px;font-size:10.5px;line-height:10.5px;color:#262626;left:1353.2px;transform-origin:0 0;transform:scaleX(0.928);">Analysis</span>
<div class="a" style="left:1399.1px;top:77px;width:1px;height:78.7px;background:#d9d9d9;"></div>
<svg class="a" style="left:1422.6px;top:77.4px;" width="28" height="29" viewBox="0 0 28 29"><path d="M1.6 4.6h11l0 0 6.6 0v22.4H1.6z" fill="#f0f0f0" stroke="#b4b4b4" stroke-width="1.1"/>
<g transform="rotate(-40 17 9)"><rect x="9" y="4.6" width="17" height="9" rx="1.2" fill="#fbfbfb" stroke="#b4b4b4" stroke-width="1.1"/><rect x="19" y="3.2" width="4.4" height="11.6" fill="#fbfbfb" stroke="#b4b4b4" stroke-width="1"/></g>
<g transform="rotate(45 10 15)"><rect x="5" y="12.6" width="12" height="5" rx="2.5" fill="none" stroke="#b4b4b4" stroke-width="1"/><path d="M7.4 15.1h8" stroke="#b4b4b4" stroke-width="1"/></g></svg>
<span class="t" style="top:111.01px;font-size:10.5px;line-height:10.5px;color:#b4b4b4;left:1409.2px;transform-origin:0 0;transform:scaleX(1.011);">Sensitivity</span>
<svg class="a" style="left:1429.9px;top:128.5px;" width="6.2" height="4.2" viewBox="0 0 6.2 4.2"><path d="M1 1 L3.1 3.2 L5.2 1" fill="none" stroke="#c4c4c4" stroke-width="1.1" stroke-linecap="round" stroke-linejoin="round"/></svg>
<span class="t" style="top:147.21px;font-size:10.5px;line-height:10.5px;color:#262626;left:1410.5px;transform-origin:0 0;transform:scaleX(0.969);">Sensitivity</span>
<div class="a" style="left:1465.9px;top:77px;width:1px;height:78.7px;background:#d9d9d9;"></div>
<svg class="a" style="left:1573.6px;top:146.2px;" width="10" height="6.4" viewBox="0 0 10 6.4"><path d="M1 1 L5 5.4 L9 1" fill="none" stroke="#444" stroke-width="1.3" stroke-linecap="round" stroke-linejoin="round"/></svg>
<span class="t" style="top:171.23px;font-size:10.6px;line-height:10.6px;color:#b4b4b4;left:15.8px;transform-origin:0 0;">ab</span>
<div class="a" style="left:15.2px;top:177.7px;width:14.6px;height:1px;background:#b4b4b4;"></div>
<span class="t" style="top:172.41px;font-size:10.5px;line-height:10.5px;color:#b4b4b4;left:33.5px;transform-origin:0 0;transform:scaleX(1.038);">Strikethrough</span>
<div class="a" style="left:115.200px;top:172.200px;width:13.600px;height:13.600px;border-radius:50%;background:#7fc0f7;border:2.400px solid #4a9be0;box-sizing:border-box;box-shadow:0 0 0 .8px rgba(74,155,224,.35);"></div>
<span class="t" style="top:172.41px;font-size:10.5px;line-height:10.5px;color:#262626;left:133px;transform-origin:0 0;transform:scaleX(1.011);">Move or Copy Sheet</span>
<div class="a" style="left:241.2px;top:164px;width:24.400px;height:28px;background:#d8d8d8;border:1px solid #c6c6c6;border-radius:3px;box-sizing:border-box;"></div>
<svg class="a" style="left:245.8px;top:175px;" width="15" height="9" viewBox="0 0 15 9"><rect x=".6" y=".6" width="13.6" height="7.4" rx="1" fill="none" stroke="#9a9a9a" stroke-width="1.1"/><rect x="3" y="3" width="3.4" height="2.6" fill="#9a9a9a"/><rect x="8.4" y="3" width="3.4" height="2.6" fill="#9a9a9a"/></svg>
<div class="a" style="left:267.2px;top:164px;width:24.800px;height:28px;background:#d8d8d8;border:1px solid #c6c6c6;border-radius:3px;box-sizing:border-box;"></div>
<svg class="a" style="left:274px;top:171.4px;" width="11" height="14" viewBox="0 0 11 14"><rect x=".6" y=".6" width="9.4" height="12.4" fill="#eee" stroke="#9a9a9a" stroke-width="1"/><path d="M.6 4.6h9.4M.6 8.8h9.4M3.8.6v12.4" stroke="#9a9a9a" stroke-width=".9"/></svg>
<svg class="a" style="left:297.6px;top:172.4px;" width="16" height="13" viewBox="0 0 16 13"><path d="M1 11.6V2a.8.8 0 0 1 .8-.8h3.4l1.4 1.6h5a.8.8 0 0 1 .8.8v1.6" fill="none" stroke="#444" stroke-width="1.1"/><path d="M1 11.6l2.4-6.2h11.4l-2.4 6.2z" fill="none" stroke="#444" stroke-width="1.1" stroke-linejoin="round"/></svg>
<span class="t" style="top:172.41px;font-size:10.5px;line-height:10.5px;color:#262626;left:317px;transform-origin:0 0;transform:scaleX(0.981);">Open</span>
<div class="a" style="left:500px;top:167.8px;width:51.2px;height:17.8px;background:#ececec;border-radius:3px;"></div>
<svg class="a" style="left:561px;top:172px;" width="16" height="14" viewBox="0 0 16 14"><path d="M3.6 5V1h8.6v4" fill="#fbfbfb" stroke="#444" stroke-width="1.1"/><rect x=".8" y="5" width="14.2" height="6.4" rx="1" fill="#fbfbfb" stroke="#444" stroke-width="1.1"/><path d="M3.4 9.4h9v3.4h-9z" fill="#fbfbfb" stroke="#444" stroke-width="1.1"/></svg>
<span class="t" style="top:172.41px;font-size:10.5px;line-height:10.5px;color:#262626;left:580.2px;transform-origin:0 0;transform:scaleX(0.913);">PDF or XPS</span>
<svg class="a" style="left:648px;top:172px;" width="16" height="15" viewBox="0 0 16 15"><path d="M3.6 5V1h8.6v4" fill="#fbfbfb" stroke="#444" stroke-width="1.1"/><rect x=".8" y="5" width="14.2" height="6.4" rx="1" fill="#fbfbfb" stroke="#444" stroke-width="1.1"/><path d="M3.4 9.4h5v3.4h-5z" fill="#fbfbfb" stroke="#444" stroke-width="1.1"/><circle cx="11.4" cy="10.6" r="3.6" fill="#fbfbfb" stroke="#21a366" stroke-width="1.1"/><path d="M9.8 10.6l1.2 1.2 2-2.2" fill="none" stroke="#21a366" stroke-width="1"/></svg>
<span class="t" style="top:172.41px;font-size:10.5px;line-height:10.5px;color:#262626;left:667.2px;transform-origin:0 0;transform:scaleX(1.030);">Quick Print</span>
<svg class="a" style="left:736px;top:172.2px;" width="16" height="13" viewBox="0 0 16 13"><path d="M1 3.4h3.2l1.2-2h5.2l1.2 2H15v8.8H1z" fill="none" stroke="#444" stroke-width="1.1" stroke-linejoin="round"/><circle cx="8.4" cy="7.6" r="2.7" fill="none" stroke="#444" stroke-width="1.1"/><path d="M2.6 5.4h1.6" stroke="#444" stroke-width="1"/></svg>
<span class="t" style="top:172.41px;font-size:10.5px;line-height:10.5px;color:#262626;left:754.9px;transform-origin:0 0;transform:scaleX(0.977);">Camera</span>
<svg class="a" style="left:811.6px;top:174.4px;" width="8" height="9" viewBox="0 0 8 9"><path d="M.8 1h6" stroke="#444" stroke-width="1.1"/><path d="M1 3.8l2.8 3 2.8-3" fill="none" stroke="#444" stroke-width="1.2"/></svg>
<div class="a" style="left:8.4px;top:201.4px;width:91.4px;height:22.4px;background:#fff;border:1px solid #e2e2e2;border-radius:4px;box-sizing:border-box;"></div>
<span class="t" style="top:206.76px;font-size:10.8px;line-height:10.8px;color:#333;left:15.1px;transform-origin:0 0;transform:scaleX(1.124);">Picture 2</span>
<svg class="a" style="left:85.3px;top:209.5px;" width="9.4" height="5.8" viewBox="0 0 9.4 5.8"><path d="M1 1 L4.7 4.8 L8.4 1" fill="none" stroke="#444" stroke-width="1.2" stroke-linecap="round" stroke-linejoin="round"/></svg>
<div class="a" style="left:108.4px;top:206.9px;width:1.4px;height:1.4px;background:#8a8a8a;border-radius:50%;"></div>
<div class="a" style="left:108.4px;top:211.7px;width:1.4px;height:1.4px;background:#8a8a8a;border-radius:50%;"></div>
<div class="a" style="left:108.4px;top:216.5px;width:1.4px;height:1.4px;background:#8a8a8a;border-radius:50%;"></div>
<div class="a" style="left:119px;top:201.4px;width:65.6px;height:22.4px;background:#fff;border:1px solid #e2e2e2;border-radius:4px;box-sizing:border-box;"></div>
<svg class="a" style="left:124.4px;top:207.2px;" width="11" height="11" viewBox="0 0 11 11"><path d="M1 1l8.6 8.6M9.6 1L1 9.600" stroke="#c6c6c6" stroke-width="1.1"/></svg>
<svg class="a" style="left:144px;top:207.2px;" width="13" height="11" viewBox="0 0 13 11"><path d="M1 5.6l3.6 4L11.6 1" fill="none" stroke="#c6c6c6" stroke-width="1.1"/></svg>
<span class="t" style="top:204.61px;font-size:14.4px;line-height:14.4px;color:#3a3a3a;font-style:italic;left:167.4px;transform-origin:0 0;transform:scaleX(1.089);font-family:'Liberation Serif',serif;">fx</span>
<div class="a" style="left:189.6px;top:201.4px;width:1402.4px;height:22.4px;background:#fff;border:1px solid #e2e2e2;border-radius:4px;box-sizing:border-box;"></div>
<span class="t" style="top:206.76px;font-size:10.8px;line-height:10.8px;color:#222;left:200px;transform-origin:0 0;transform:scaleX(1.071);">=Spark2</span>
<svg class="a" style="left:1578px;top:207.5px;" width="10" height="6.2" viewBox="0 0 10 6.2"><path d="M1 1 L5 5.2 L9 1" fill="none" stroke="#444" stroke-width="1.3" stroke-linecap="round" stroke-linejoin="round"/></svg>
<div class="a" style="left:1px;top:229.6px;width:1578.6px;height:315.1px;background:#fff;"></div>
<div class="a" style="left:1px;top:229.6px;width:1578.6px;height:18.2px;background:#f1f1f1;"></div>
<div class="a" style="left:1px;top:229.6px;width:22.6px;height:315.1px;background:#efefef;"></div>
<div class="a" style="left:110.5px;top:247.8px;width:1px;height:296.9px;background:#e1e1e1;"></div>
<div class="a" style="left:192px;top:247.8px;width:1px;height:296.9px;background:#e1e1e1;"></div>
<div class="a" style="left:273.5px;top:247.8px;width:1px;height:296.9px;background:#e1e1e1;"></div>
<div class="a" style="left:355px;top:247.8px;width:1px;height:296.9px;background:#e1e1e1;"></div>
<div class="a" style="left:436.5px;top:247.8px;width:1px;height:296.9px;background:#e1e1e1;"></div>
<div class="a" style="left:518px;top:247.8px;width:1px;height:296.9px;background:#e1e1e1;"></div>
<div class="a" style="left:599.5px;top:247.8px;width:1px;height:296.9px;background:#e1e1e1;"></div>
<div class="a" style="left:681px;top:247.8px;width:1px;height:296.9px;background:#e1e1e1;"></div>
<div class="a" style="left:762.5px;top:247.8px;width:1px;height:296.9px;background:#e1e1e1;"></div>
<div class="a" style="left:844px;top:247.8px;width:1px;height:296.9px;background:#e1e1e1;"></div>
<div class="a" style="left:925.5px;top:247.8px;width:1px;height:296.9px;background:#e1e1e1;"></div>
<div class="a" style="left:1007px;top:247.8px;width:1px;height:296.9px;background:#e1e1e1;"></div>
<div class="a" style="left:1088.5px;top:247.8px;width:1px;height:296.9px;background:#e1e1e1;"></div>
<div class="a" style="left:1205.5px;top:247.8px;width:1px;height:296.9px;background:#e1e1e1;"></div>
<div class="a" style="left:1426px;top:247.8px;width:1px;height:296.9px;background:#e1e1e1;"></div>
<div class="a" style="left:1542px;top:247.8px;width:1px;height:296.9px;background:#e1e1e1;"></div>
<div class="a" style="left:24px;top:266.1px;width:1555.6px;height:1px;background:#e1e1e1;"></div>
<div class="a" style="left:24px;top:304px;width:1555.6px;height:1px;background:#e1e1e1;"></div>
<div class="a" style="left:24px;top:342px;width:1555.6px;height:1px;background:#e1e1e1;"></div>
<div class="a" style="left:24px;top:380px;width:1555.6px;height:1px;background:#e1e1e1;"></div>
<div class="a" style="left:24px;top:418px;width:1555.6px;height:1px;background:#e1e1e1;"></div>
<div class="a" style="left:24px;top:456px;width:1555.6px;height:1px;background:#e1e1e1;"></div>
<div class="a" style="left:24px;top:494px;width:1555.6px;height:1px;background:#e1e1e1;"></div>
<div class="a" style="left:24px;top:531.8px;width:1555.6px;height:1px;background:#e1e1e1;"></div>
<div class="a" style="left:110.5px;top:232px;width:1px;height:15.8px;background:#d0d0d0;"></div>
<span class="t" style="top:235.3px;font-size:10.4px;line-height:10.4px;color:#2e2e2e;left:63.89px;transform-origin:0 0;transform:scaleX(1.040);">A</span>
<div class="a" style="left:192px;top:232px;width:1px;height:15.8px;background:#d0d0d0;"></div>
<span class="t" style="top:235.3px;font-size:10.4px;line-height:10.4px;color:#2e2e2e;left:148.14px;transform-origin:0 0;transform:scaleX(1.040);">B</span>
<div class="a" style="left:273.5px;top:232px;width:1px;height:15.8px;background:#d0d0d0;"></div>
<span class="t" style="top:235.3px;font-size:10.4px;line-height:10.4px;color:#2e2e2e;left:229.34px;transform-origin:0 0;transform:scaleX(1.040);">C</span>
<div class="a" style="left:355px;top:232px;width:1px;height:15.8px;background:#d0d0d0;"></div>
<span class="t" style="top:235.3px;font-size:10.4px;line-height:10.4px;color:#2e2e2e;left:310.84px;transform-origin:0 0;transform:scaleX(1.040);">D</span>
<div class="a" style="left:436.5px;top:232px;width:1px;height:15.8px;background:#d0d0d0;"></div>
<span class="t" style="top:235.3px;font-size:10.4px;line-height:10.4px;color:#2e2e2e;left:392.64px;transform-origin:0 0;transform:scaleX(1.040);">E</span>
<div class="a" style="left:518px;top:232px;width:1px;height:15.8px;background:#d0d0d0;"></div>
<span class="t" style="top:235.3px;font-size:10.4px;line-height:10.4px;color:#2e2e2e;left:474.45px;transform-origin:0 0;transform:scaleX(1.040);">F</span>
<div class="a" style="left:599.5px;top:232px;width:1px;height:15.8px;background:#d0d0d0;"></div>
<span class="t" style="top:235.3px;font-size:10.4px;line-height:10.4px;color:#2e2e2e;left:555.04px;transform-origin:0 0;transform:scaleX(1.040);">G</span>
<div class="a" style="left:681px;top:232px;width:1px;height:15.8px;background:#d0d0d0;"></div>
<span class="t" style="top:235.3px;font-size:10.4px;line-height:10.4px;color:#2e2e2e;left:636.84px;transform-origin:0 0;transform:scaleX(1.040);">H</span>
<div class="a" style="left:762.5px;top:232px;width:1px;height:15.8px;background:#d0d0d0;"></div>
<span class="t" style="top:235.3px;font-size:10.4px;line-height:10.4px;color:#2e2e2e;left:720.75px;transform-origin:0 0;transform:scaleX(1.040);">I</span>
<div class="a" style="left:844px;top:232px;width:1px;height:15.8px;background:#d0d0d0;"></div>
<span class="t" style="top:235.3px;font-size:10.4px;line-height:10.4px;color:#2e2e2e;left:801.05px;transform-origin:0 0;transform:scaleX(1.040);">J</span>
<div class="a" style="left:925.5px;top:232px;width:1px;height:15.8px;background:#d0d0d0;"></div>
<span class="t" style="top:235.3px;font-size:10.4px;line-height:10.4px;color:#2e2e2e;left:881.64px;transform-origin:0 0;transform:scaleX(1.040);">K</span>
<div class="a" style="left:1007px;top:232px;width:1px;height:15.8px;background:#d0d0d0;"></div>
<span class="t" style="top:235.3px;font-size:10.4px;line-height:10.4px;color:#2e2e2e;left:963.74px;transform-origin:0 0;transform:scaleX(1.040);">L</span>
<div class="a" style="left:1088.5px;top:232px;width:1px;height:15.8px;background:#d0d0d0;"></div>
<span class="t" style="top:235.3px;font-size:10.4px;line-height:10.4px;color:#2e2e2e;left:1043.75px;transform-origin:0 0;transform:scaleX(1.040);">M</span>
<div class="a" style="left:1205.5px;top:232px;width:1px;height:15.8px;background:#d0d0d0;"></div>
<span class="t" style="top:235.3px;font-size:10.4px;line-height:10.4px;color:#2e2e2e;left:1143.59px;transform-origin:0 0;transform:scaleX(1.040);">N</span>
<div class="a" style="left:1426px;top:232px;width:1px;height:15.8px;background:#d0d0d0;"></div>
<span class="t" style="top:235.3px;font-size:10.4px;line-height:10.4px;color:#2e2e2e;left:1312.04px;transform-origin:0 0;transform:scaleX(1.040);">O</span>
<div class="a" style="left:1542px;top:232px;width:1px;height:15.8px;background:#d0d0d0;"></div>
<span class="t" style="top:235.3px;font-size:10.4px;line-height:10.4px;color:#2e2e2e;left:1480.89px;transform-origin:0 0;transform:scaleX(1.040);">P</span>
<div class="a" style="left:1px;top:266.1px;width:22.6px;height:1px;background:#cfcfcf;"></div>
<span class="t" style="top:253.06px;font-size:10.8px;line-height:10.8px;color:#2e2e2e;left:9.35px;transform-origin:0 0;transform:scaleX(0.950);">1</span>
<div class="a" style="left:1px;top:304px;width:22.6px;height:1px;background:#cfcfcf;"></div>
<span class="t" style="top:290.96px;font-size:10.8px;line-height:10.8px;color:#2e2e2e;left:9.35px;transform-origin:0 0;transform:scaleX(0.950);">2</span>
<div class="a" style="left:1px;top:342px;width:22.6px;height:1px;background:#cfcfcf;"></div>
<span class="t" style="top:328.96px;font-size:10.8px;line-height:10.8px;color:#2e2e2e;left:9.35px;transform-origin:0 0;transform:scaleX(0.950);">3</span>
<div class="a" style="left:1px;top:380px;width:22.6px;height:1px;background:#cfcfcf;"></div>
<span class="t" style="top:366.96px;font-size:10.8px;line-height:10.8px;color:#2e2e2e;left:9.35px;transform-origin:0 0;transform:scaleX(0.950);">4</span>
<div class="a" style="left:1px;top:418px;width:22.6px;height:1px;background:#cfcfcf;"></div>
<span class="t" style="top:404.96px;font-size:10.8px;line-height:10.8px;color:#2e2e2e;left:9.35px;transform-origin:0 0;transform:scaleX(0.950);">5</span>
<div class="a" style="left:1px;top:456px;width:22.6px;height:1px;background:#cfcfcf;"></div>
<span class="t" style="top:442.96px;font-size:10.8px;line-height:10.8px;color:#2e2e2e;left:9.35px;transform-origin:0 0;transform:scaleX(0.950);">6</span>
<div class="a" style="left:1px;top:494px;width:22.6px;height:1px;background:#cfcfcf;"></div>
<span class="t" style="top:480.96px;font-size:10.8px;line-height:10.8px;color:#2e2e2e;left:9.35px;transform-origin:0 0;transform:scaleX(0.950);">7</span>
<div class="a" style="left:1px;top:531.8px;width:22.6px;height:1px;background:#cfcfcf;"></div>
<span class="t" style="top:518.76px;font-size:10.8px;line-height:10.8px;color:#2e2e2e;left:9.35px;transform-origin:0 0;transform:scaleX(0.950);">8</span>
<div class="a" style="left:23.25px;top:247.8px;width:1.1px;height:296.9px;background:#9c9c9c;"></div>
<div class="a" style="left:1px;top:247.3px;width:1578.6px;height:1px;background:#c8c8c8;"></div>
<svg class="a" style="left:9.6px;top:234.6px;" width="12" height="11" viewBox="0 0 12 11"><path d="M11 1V10.200H1z" fill="#b4b4b4"/></svg>
<div class="a" style="left:24px;top:248.3px;width:1518.5px;height:18.3px;background:#4472c4;"></div>
<span class="t" style="top:252.81px;font-size:11.8px;line-height:11.8px;color:#fff;font-weight:700;-webkit-text-stroke:0;left:27px;transform-origin:0 0;transform:scaleX(1.017);">Department</span>
<span class="t" style="top:252.81px;font-size:11.8px;line-height:11.8px;color:#fff;font-weight:700;-webkit-text-stroke:0;left:115px;transform-origin:0 0;transform:scaleX(0.921);">January</span>
<span class="t" style="top:252.81px;font-size:11.8px;line-height:11.8px;color:#fff;font-weight:700;-webkit-text-stroke:0;left:196.4px;transform-origin:0 0;transform:scaleX(0.966);">February</span>
<span class="t" style="top:252.81px;font-size:11.8px;line-height:11.8px;color:#fff;font-weight:700;-webkit-text-stroke:0;left:278px;transform-origin:0 0;transform:scaleX(0.984);">March</span>
<span class="t" style="top:252.81px;font-size:11.8px;line-height:11.8px;color:#fff;font-weight:700;-webkit-text-stroke:0;left:359.4px;transform-origin:0 0;transform:scaleX(0.990);">April</span>
<span class="t" style="top:252.81px;font-size:11.8px;line-height:11.8px;color:#fff;font-weight:700;-webkit-text-stroke:0;left:440.6px;transform-origin:0 0;transform:scaleX(0.976);">May</span>
<span class="t" style="top:252.81px;font-size:11.8px;line-height:11.8px;color:#fff;font-weight:700;-webkit-text-stroke:0;left:521.5px;transform-origin:0 0;transform:scaleX(0.962);">June</span>
<span class="t" style="top:252.81px;font-size:11.8px;line-height:11.8px;color:#fff;font-weight:700;-webkit-text-stroke:0;left:603.5px;transform-origin:0 0;transform:scaleX(0.911);">July</span>
<span class="t" style="top:252.81px;font-size:11.8px;line-height:11.8px;color:#fff;font-weight:700;-webkit-text-stroke:0;left:684.5px;transform-origin:0 0;transform:scaleX(0.960);">August</span>
<span class="t" style="top:252.81px;font-size:11.8px;line-height:11.8px;color:#fff;font-weight:700;-webkit-text-stroke:0;left:765.5px;transform-origin:0 0;transform:scaleX(1.025);">September</span>
<span class="t" style="top:252.81px;font-size:11.8px;line-height:11.8px;color:#fff;font-weight:700;-webkit-text-stroke:0;left:848.5px;transform-origin:0 0;transform:scaleX(0.995);">October</span>
<span class="t" style="top:252.81px;font-size:11.8px;line-height:11.8px;color:#fff;font-weight:700;-webkit-text-stroke:0;left:930px;transform-origin:0 0;transform:scaleX(1.022);">November</span>
<span class="t" style="top:252.81px;font-size:11.8px;line-height:11.8px;color:#fff;font-weight:700;-webkit-text-stroke:0;left:1011.5px;transform-origin:0 0;">December</span>
<span class="t" style="top:252.81px;font-size:11.8px;line-height:11.8px;color:#fff;font-weight:700;-webkit-text-stroke:0;left:1092.9px;transform-origin:0 0;transform:scaleX(0.915);">Spark1</span>
<span class="t" style="top:252.81px;font-size:11.8px;line-height:11.8px;color:#fff;font-weight:700;-webkit-text-stroke:0;left:1208.5px;transform-origin:0 0;transform:scaleX(0.952);">Spacer column</span>
<span class="t" style="top:252.81px;font-size:11.8px;line-height:11.8px;color:#fff;font-weight:700;-webkit-text-stroke:0;left:1430px;transform-origin:0 0;transform:scaleX(0.915);">Spark2</span>
<div class="a" style="left:96.7px;top:250.4px;width:14px;height:13.7px;background:#fbfcfe;box-shadow:inset 0 0 0 .6px #c9d3ea;"></div>
<svg class="a" style="left:100.3px;top:255.4px;" width="8" height="5" viewBox="0 0 8 5"><path d="M.3 .3h6.6L3.6 4.1z" fill="#505050"/></svg>
<div class="a" style="left:178.2px;top:250.4px;width:14px;height:13.7px;background:#fbfcfe;box-shadow:inset 0 0 0 .6px #c9d3ea;"></div>
<svg class="a" style="left:181.8px;top:255.4px;" width="8" height="5" viewBox="0 0 8 5"><path d="M.3 .3h6.6L3.6 4.1z" fill="#505050"/></svg>
<div class="a" style="left:259.7px;top:250.4px;width:14px;height:13.7px;background:#fbfcfe;box-shadow:inset 0 0 0 .6px #c9d3ea;"></div>
<svg class="a" style="left:263.3px;top:255.4px;" width="8" height="5" viewBox="0 0 8 5"><path d="M.3 .3h6.6L3.6 4.1z" fill="#505050"/></svg>
<div class="a" style="left:341.2px;top:250.4px;width:14px;height:13.7px;background:#fbfcfe;box-shadow:inset 0 0 0 .6px #c9d3ea;"></div>
<svg class="a" style="left:344.8px;top:255.4px;" width="8" height="5" viewBox="0 0 8 5"><path d="M.3 .3h6.6L3.6 4.1z" fill="#505050"/></svg>
<div class="a" style="left:422.7px;top:250.4px;width:14px;height:13.7px;background:#fbfcfe;box-shadow:inset 0 0 0 .6px #c9d3ea;"></div>
<svg class="a" style="left:426.3px;top:255.4px;" width="8" height="5" viewBox="0 0 8 5"><path d="M.3 .3h6.6L3.6 4.1z" fill="#505050"/></svg>
<div class="a" style="left:504.2px;top:250.4px;width:14px;height:13.7px;background:#fbfcfe;box-shadow:inset 0 0 0 .6px #c9d3ea;"></div>
<svg class="a" style="left:507.8px;top:255.4px;" width="8" height="5" viewBox="0 0 8 5"><path d="M.3 .3h6.6L3.6 4.1z" fill="#505050"/></svg>
<div class="a" style="left:585.7px;top:250.4px;width:14px;height:13.7px;background:#fbfcfe;box-shadow:inset 0 0 0 .6px #c9d3ea;"></div>
<svg class="a" style="left:589.3px;top:255.4px;" width="8" height="5" viewBox="0 0 8 5"><path d="M.3 .3h6.6L3.6 4.1z" fill="#505050"/></svg>
<div class="a" style="left:667.2px;top:250.4px;width:14px;height:13.7px;background:#fbfcfe;box-shadow:inset 0 0 0 .6px #c9d3ea;"></div>
<svg class="a" style="left:670.8px;top:255.4px;" width="8" height="5" viewBox="0 0 8 5"><path d="M.3 .3h6.6L3.6 4.1z" fill="#505050"/></svg>
<div class="a" style="left:748.7px;top:250.4px;width:14px;height:13.7px;background:#fbfcfe;box-shadow:inset 0 0 0 .6px #c9d3ea;"></div>
<svg class="a" style="left:752.3px;top:255.4px;" width="8" height="5" viewBox="0 0 8 5"><path d="M.3 .3h6.6L3.6 4.1z" fill="#505050"/></svg>
<div class="a" style="left:830.2px;top:250.4px;width:14px;height:13.7px;background:#fbfcfe;box-shadow:inset 0 0 0 .6px #c9d3ea;"></div>
<svg class="a" style="left:833.8px;top:255.4px;" width="8" height="5" viewBox="0 0 8 5"><path d="M.3 .3h6.6L3.6 4.1z" fill="#505050"/></svg>
<div class="a" style="left:911.7px;top:250.4px;width:14px;height:13.7px;background:#fbfcfe;box-shadow:inset 0 0 0 .6px #c9d3ea;"></div>
<svg class="a" style="left:915.3px;top:255.4px;" width="8" height="5" viewBox="0 0 8 5"><path d="M.3 .3h6.6L3.6 4.1z" fill="#505050"/></svg>
<div class="a" style="left:993.2px;top:250.4px;width:14px;height:13.7px;background:#fbfcfe;box-shadow:inset 0 0 0 .6px #c9d3ea;"></div>
<svg class="a" style="left:996.8px;top:255.4px;" width="8" height="5" viewBox="0 0 8 5"><path d="M.3 .3h6.6L3.6 4.1z" fill="#505050"/></svg>
<div class="a" style="left:1074.7px;top:250.4px;width:14px;height:13.7px;background:#fbfcfe;box-shadow:inset 0 0 0 .6px #c9d3ea;"></div>
<svg class="a" style="left:1078.3px;top:255.4px;" width="8" height="5" viewBox="0 0 8 5"><path d="M.3 .3h6.6L3.6 4.1z" fill="#505050"/></svg>
<div class="a" style="left:1191.7px;top:250.4px;width:14px;height:13.7px;background:#fbfcfe;box-shadow:inset 0 0 0 .6px #c9d3ea;"></div>
<svg class="a" style="left:1195.3px;top:255.4px;" width="8" height="5" viewBox="0 0 8 5"><path d="M.3 .3h6.6L3.6 4.1z" fill="#505050"/></svg>
<div class="a" style="left:1412.2px;top:250.4px;width:14px;height:13.7px;background:#fbfcfe;box-shadow:inset 0 0 0 .6px #c9d3ea;"></div>
<svg class="a" style="left:1415.8px;top:255.4px;" width="8" height="5" viewBox="0 0 8 5"><path d="M.3 .3h6.6L3.6 4.1z" fill="#505050"/></svg>
<div class="a" style="left:1528.2px;top:250.4px;width:14px;height:13.7px;background:#fbfcfe;box-shadow:inset 0 0 0 .6px #c9d3ea;"></div>
<svg class="a" style="left:1531.8px;top:255.4px;" width="8" height="5" viewBox="0 0 8 5"><path d="M.3 .3h6.6L3.6 4.1z" fill="#505050"/></svg>
<svg class="a" style="left:0px;top:0px;" width="1600" height="595" viewBox="0 0 1600 595"><path d="M24 303.8H1542.500M24 341.8H1542.500M24 379.8H1542.500M24 417.8H1542.500M24 455.8H1542.500M24 493.8H1542.500" stroke="#6a80c0" stroke-width="1.100" fill="none"/></svg>
<div class="a" style="left:1542px;top:248px;width:1px;height:246.5px;background:#7f9bd2;"></div>
<span class="t" style="top:290.18px;font-size:11.6px;line-height:11.6px;color:#111;left:27px;transform-origin:0 0;transform:scaleX(1.018);">Dept 1</span>
<span class="t" style="top:290.18px;font-size:11.6px;line-height:11.6px;color:#111;right:1413.9px;transform-origin:100% 0;transform:scaleX(0.985);">267,764</span>
<span class="t" style="top:290.18px;font-size:11.6px;line-height:11.6px;color:#111;right:1332.4px;transform-origin:100% 0;transform:scaleX(0.985);">229,388</span>
<span class="t" style="top:290.18px;font-size:11.6px;line-height:11.6px;color:#111;right:1250.9px;transform-origin:100% 0;transform:scaleX(0.985);">128,815</span>
<span class="t" style="top:290.18px;font-size:11.6px;line-height:11.6px;color:#111;right:1169.4px;transform-origin:100% 0;transform:scaleX(0.985);">206,318</span>
<span class="t" style="top:290.18px;font-size:11.6px;line-height:11.6px;color:#111;right:1087.9px;transform-origin:100% 0;transform:scaleX(0.985);">163,405</span>
<span class="t" style="top:290.18px;font-size:11.6px;line-height:11.6px;color:#111;right:1006.4px;transform-origin:100% 0;transform:scaleX(0.985);">194,503</span>
<span class="t" style="top:290.18px;font-size:11.6px;line-height:11.6px;color:#111;right:924.9px;transform-origin:100% 0;transform:scaleX(0.985);">241,551</span>
<span class="t" style="top:290.18px;font-size:11.6px;line-height:11.6px;color:#111;right:843.4px;transform-origin:100% 0;transform:scaleX(0.985);">131,472</span>
<span class="t" style="top:290.18px;font-size:11.6px;line-height:11.6px;color:#111;right:761.9px;transform-origin:100% 0;transform:scaleX(0.985);">106,161</span>
<span class="t" style="top:290.18px;font-size:11.6px;line-height:11.6px;color:#111;right:680.4px;transform-origin:100% 0;transform:scaleX(0.985);">294,773</span>
<span class="t" style="top:290.18px;font-size:11.6px;line-height:11.6px;color:#111;right:598.9px;transform-origin:100% 0;transform:scaleX(0.985);">150,988</span>
<span class="t" style="top:290.18px;font-size:11.6px;line-height:11.6px;color:#111;right:517.4px;transform-origin:100% 0;transform:scaleX(0.985);">277,065</span>
<span class="t" style="top:328.18px;font-size:11.6px;line-height:11.6px;color:#111;left:27px;transform-origin:0 0;transform:scaleX(1.018);">Dept 2</span>
<span class="t" style="top:328.18px;font-size:11.6px;line-height:11.6px;color:#111;right:1413.9px;transform-origin:100% 0;transform:scaleX(0.985);">80,257</span>
<span class="t" style="top:328.18px;font-size:11.6px;line-height:11.6px;color:#111;right:1332.4px;transform-origin:100% 0;transform:scaleX(0.985);">119,841</span>
<span class="t" style="top:328.18px;font-size:11.6px;line-height:11.6px;color:#111;right:1250.9px;transform-origin:100% 0;transform:scaleX(0.985);">225,425</span>
<span class="t" style="top:328.18px;font-size:11.6px;line-height:11.6px;color:#111;right:1169.4px;transform-origin:100% 0;transform:scaleX(0.985);">84,136</span>
<span class="t" style="top:328.18px;font-size:11.6px;line-height:11.6px;color:#111;right:1087.9px;transform-origin:100% 0;transform:scaleX(0.985);">130,705</span>
<span class="t" style="top:328.18px;font-size:11.6px;line-height:11.6px;color:#111;right:1006.4px;transform-origin:100% 0;transform:scaleX(0.985);">205,313</span>
<span class="t" style="top:328.18px;font-size:11.6px;line-height:11.6px;color:#111;right:924.9px;transform-origin:100% 0;transform:scaleX(0.985);">192,138</span>
<span class="t" style="top:328.18px;font-size:11.6px;line-height:11.6px;color:#111;right:843.4px;transform-origin:100% 0;transform:scaleX(0.985);">110,071</span>
<span class="t" style="top:328.18px;font-size:11.6px;line-height:11.6px;color:#111;right:761.9px;transform-origin:100% 0;transform:scaleX(0.985);">243,205</span>
<span class="t" style="top:328.18px;font-size:11.6px;line-height:11.6px;color:#111;right:680.4px;transform-origin:100% 0;transform:scaleX(0.985);">193,704</span>
<span class="t" style="top:328.18px;font-size:11.6px;line-height:11.6px;color:#111;right:598.9px;transform-origin:100% 0;transform:scaleX(0.985);">275,261</span>
<span class="t" style="top:328.18px;font-size:11.6px;line-height:11.6px;color:#111;right:517.4px;transform-origin:100% 0;transform:scaleX(0.985);">201,446</span>
<span class="t" style="top:366.18px;font-size:11.6px;line-height:11.6px;color:#111;left:27px;transform-origin:0 0;transform:scaleX(1.018);">Dept 3</span>
<span class="t" style="top:366.18px;font-size:11.6px;line-height:11.6px;color:#111;right:1413.9px;transform-origin:100% 0;transform:scaleX(0.985);">183,121</span>
<span class="t" style="top:366.18px;font-size:11.6px;line-height:11.6px;color:#111;right:1332.4px;transform-origin:100% 0;transform:scaleX(0.985);">230,093</span>
<span class="t" style="top:366.18px;font-size:11.6px;line-height:11.6px;color:#111;right:1250.9px;transform-origin:100% 0;transform:scaleX(0.985);">190,892</span>
<span class="t" style="top:366.18px;font-size:11.6px;line-height:11.6px;color:#111;right:1169.4px;transform-origin:100% 0;transform:scaleX(0.985);">151,168</span>
<span class="t" style="top:366.18px;font-size:11.6px;line-height:11.6px;color:#111;right:1087.9px;transform-origin:100% 0;transform:scaleX(0.985);">214,503</span>
<span class="t" style="top:366.18px;font-size:11.6px;line-height:11.6px;color:#111;right:1006.4px;transform-origin:100% 0;transform:scaleX(0.985);">142,113</span>
<span class="t" style="top:366.18px;font-size:11.6px;line-height:11.6px;color:#111;right:924.9px;transform-origin:100% 0;transform:scaleX(0.985);">206,611</span>
<span class="t" style="top:366.18px;font-size:11.6px;line-height:11.6px;color:#111;right:843.4px;transform-origin:100% 0;transform:scaleX(0.985);">298,141</span>
<span class="t" style="top:366.18px;font-size:11.6px;line-height:11.6px;color:#111;right:761.9px;transform-origin:100% 0;transform:scaleX(0.985);">273,627</span>
<span class="t" style="top:366.18px;font-size:11.6px;line-height:11.6px;color:#111;right:680.4px;transform-origin:100% 0;transform:scaleX(0.985);">281,840</span>
<span class="t" style="top:366.18px;font-size:11.6px;line-height:11.6px;color:#111;right:598.9px;transform-origin:100% 0;transform:scaleX(0.985);">213,267</span>
<span class="t" style="top:366.18px;font-size:11.6px;line-height:11.6px;color:#111;right:517.4px;transform-origin:100% 0;transform:scaleX(0.985);">117,329</span>
<span class="t" style="top:404.18px;font-size:11.6px;line-height:11.6px;color:#111;left:27px;transform-origin:0 0;transform:scaleX(1.018);">Dept 4</span>
<span class="t" style="top:404.18px;font-size:11.6px;line-height:11.6px;color:#111;right:1413.9px;transform-origin:100% 0;transform:scaleX(0.985);">131,135</span>
<span class="t" style="top:404.18px;font-size:11.6px;line-height:11.6px;color:#111;right:1332.4px;transform-origin:100% 0;transform:scaleX(0.985);">166,972</span>
<span class="t" style="top:404.18px;font-size:11.6px;line-height:11.6px;color:#111;right:1250.9px;transform-origin:100% 0;transform:scaleX(0.985);">198,600</span>
<span class="t" style="top:404.18px;font-size:11.6px;line-height:11.6px;color:#111;right:1169.4px;transform-origin:100% 0;transform:scaleX(0.985);">187,216</span>
<span class="t" style="top:404.18px;font-size:11.6px;line-height:11.6px;color:#111;right:1087.9px;transform-origin:100% 0;transform:scaleX(0.985);">148,105</span>
<span class="t" style="top:404.18px;font-size:11.6px;line-height:11.6px;color:#111;right:1006.4px;transform-origin:100% 0;transform:scaleX(0.985);">119,265</span>
<span class="t" style="top:404.18px;font-size:11.6px;line-height:11.6px;color:#111;right:924.9px;transform-origin:100% 0;transform:scaleX(0.985);">139,407</span>
<span class="t" style="top:404.18px;font-size:11.6px;line-height:11.6px;color:#111;right:843.4px;transform-origin:100% 0;transform:scaleX(0.985);">248,271</span>
<span class="t" style="top:404.18px;font-size:11.6px;line-height:11.6px;color:#111;right:761.9px;transform-origin:100% 0;transform:scaleX(0.985);">224,973</span>
<span class="t" style="top:404.18px;font-size:11.6px;line-height:11.6px;color:#111;right:680.4px;transform-origin:100% 0;transform:scaleX(0.985);">123,482</span>
<span class="t" style="top:404.18px;font-size:11.6px;line-height:11.6px;color:#111;right:598.9px;transform-origin:100% 0;transform:scaleX(0.985);">197,716</span>
<span class="t" style="top:404.18px;font-size:11.6px;line-height:11.6px;color:#111;right:517.4px;transform-origin:100% 0;transform:scaleX(0.985);">264,277</span>
<span class="t" style="top:442.18px;font-size:11.6px;line-height:11.6px;color:#111;left:27px;transform-origin:0 0;transform:scaleX(1.018);">Dept 5</span>
<span class="t" style="top:442.18px;font-size:11.6px;line-height:11.6px;color:#111;right:1413.9px;transform-origin:100% 0;transform:scaleX(0.985);">80,318</span>
<span class="t" style="top:442.18px;font-size:11.6px;line-height:11.6px;color:#111;right:1332.4px;transform-origin:100% 0;transform:scaleX(0.985);">200,897</span>
<span class="t" style="top:442.18px;font-size:11.6px;line-height:11.6px;color:#111;right:1250.9px;transform-origin:100% 0;transform:scaleX(0.985);">143,683</span>
<span class="t" style="top:442.18px;font-size:11.6px;line-height:11.6px;color:#111;right:1169.4px;transform-origin:100% 0;transform:scaleX(0.985);">234,735</span>
<span class="t" style="top:442.18px;font-size:11.6px;line-height:11.6px;color:#111;right:1087.9px;transform-origin:100% 0;transform:scaleX(0.985);">298,413</span>
<span class="t" style="top:442.18px;font-size:11.6px;line-height:11.6px;color:#111;right:1006.4px;transform-origin:100% 0;transform:scaleX(0.985);">170,368</span>
<span class="t" style="top:442.18px;font-size:11.6px;line-height:11.6px;color:#111;right:924.9px;transform-origin:100% 0;transform:scaleX(0.985);">236,094</span>
<span class="t" style="top:442.18px;font-size:11.6px;line-height:11.6px;color:#111;right:843.4px;transform-origin:100% 0;transform:scaleX(0.985);">191,268</span>
<span class="t" style="top:442.18px;font-size:11.6px;line-height:11.6px;color:#111;right:761.9px;transform-origin:100% 0;transform:scaleX(0.985);">101,209</span>
<span class="t" style="top:442.18px;font-size:11.6px;line-height:11.6px;color:#111;right:680.4px;transform-origin:100% 0;transform:scaleX(0.985);">99,354</span>
<span class="t" style="top:442.18px;font-size:11.6px;line-height:11.6px;color:#111;right:598.9px;transform-origin:100% 0;transform:scaleX(0.985);">263,130</span>
<span class="t" style="top:442.18px;font-size:11.6px;line-height:11.6px;color:#111;right:517.4px;transform-origin:100% 0;transform:scaleX(0.985);">127,012</span>
<span class="t" style="top:480.18px;font-size:11.6px;line-height:11.6px;color:#111;left:27px;transform-origin:0 0;transform:scaleX(1.018);">Dept 6</span>
<span class="t" style="top:480.18px;font-size:11.6px;line-height:11.6px;color:#111;right:1413.9px;transform-origin:100% 0;transform:scaleX(0.985);">253,019</span>
<span class="t" style="top:480.18px;font-size:11.6px;line-height:11.6px;color:#111;right:1332.4px;transform-origin:100% 0;transform:scaleX(0.985);">125,645</span>
<span class="t" style="top:480.18px;font-size:11.6px;line-height:11.6px;color:#111;right:1250.9px;transform-origin:100% 0;transform:scaleX(0.985);">199,570</span>
<span class="t" style="top:480.18px;font-size:11.6px;line-height:11.6px;color:#111;right:1169.4px;transform-origin:100% 0;transform:scaleX(0.985);">253,042</span>
<span class="t" style="top:480.18px;font-size:11.6px;line-height:11.6px;color:#111;right:1087.9px;transform-origin:100% 0;transform:scaleX(0.985);">203,566</span>
<span class="t" style="top:480.18px;font-size:11.6px;line-height:11.6px;color:#111;right:1006.4px;transform-origin:100% 0;transform:scaleX(0.985);">245,284</span>
<span class="t" style="top:480.18px;font-size:11.6px;line-height:11.6px;color:#111;right:924.9px;transform-origin:100% 0;transform:scaleX(0.985);">222,643</span>
<span class="t" style="top:480.18px;font-size:11.6px;line-height:11.6px;color:#111;right:843.4px;transform-origin:100% 0;transform:scaleX(0.985);">219,872</span>
<span class="t" style="top:480.18px;font-size:11.6px;line-height:11.6px;color:#111;right:761.9px;transform-origin:100% 0;transform:scaleX(0.985);">195,908</span>
<span class="t" style="top:480.18px;font-size:11.6px;line-height:11.6px;color:#111;right:680.4px;transform-origin:100% 0;transform:scaleX(0.985);">86,316</span>
<span class="t" style="top:480.18px;font-size:11.6px;line-height:11.6px;color:#111;right:598.9px;transform-origin:100% 0;transform:scaleX(0.985);">163,577</span>
<span class="t" style="top:480.18px;font-size:11.6px;line-height:11.6px;color:#111;right:517.4px;transform-origin:100% 0;transform:scaleX(0.985);">161,646</span>
<div class="a" style="left:1097.7px;top:270.4px;width:26px;height:30.2px;background:#ffc000;"></div>
<div class="a" style="left:1135px;top:278.4px;width:25.7px;height:22.2px;background:#ffc000;"></div>
<div class="a" style="left:1172px;top:299.4px;width:25.8px;height:1.2px;background:#ffd24a;"></div>
<div class="a" style="left:1097.7px;top:337.4px;width:26px;height:1.2px;background:#ffd24a;"></div>
<div class="a" style="left:1135px;top:330px;width:25.7px;height:8.6px;background:#ffc000;"></div>
<div class="a" style="left:1172px;top:308px;width:25.8px;height:30.6px;background:#ffc000;"></div>
<div class="a" style="left:1097.7px;top:375.3px;width:26px;height:1.2px;background:#ffd24a;"></div>
<div class="a" style="left:1135px;top:346px;width:25.7px;height:30.5px;background:#ffc000;"></div>
<div class="a" style="left:1172px;top:371.7px;width:25.8px;height:4.8px;background:#ffc000;"></div>
<div class="a" style="left:1097.7px;top:413.5px;width:26px;height:1.2px;background:#ffd24a;"></div>
<div class="a" style="left:1135px;top:399px;width:25.7px;height:15.7px;background:#ffc000;"></div>
<div class="a" style="left:1172px;top:384px;width:25.8px;height:30.7px;background:#ffc000;"></div>
<div class="a" style="left:1097.7px;top:451.3px;width:26px;height:1.2px;background:#ffd24a;"></div>
<div class="a" style="left:1135px;top:422.5px;width:25.7px;height:30px;background:#ffc000;"></div>
<div class="a" style="left:1172px;top:436.8px;width:25.8px;height:15.7px;background:#ffc000;"></div>
<div class="a" style="left:1097.7px;top:460.3px;width:26px;height:30px;background:#ffc000;"></div>
<div class="a" style="left:1135px;top:489.1px;width:25.7px;height:1.2px;background:#ffd24a;"></div>
<div class="a" style="left:1172px;top:473px;width:25.8px;height:17.3px;background:#ffc000;"></div>
<svg class="a" style="left:0px;top:0px;" width="1600" height="595" viewBox="0 0 1600 595"><polyline points="1433.7,275.35 1442.95,281.25 1452.21,296.72 1461.46,284.8 1470.72,291.4 1479.97,286.62 1489.23,279.38 1498.48,296.31 1507.74,300.2 1516.99,271.2 1526.25,293.31 1535.5,273.92" fill="none" stroke="#5f7b9f" stroke-width="1.300" stroke-linejoin="round"/><polyline points="1433.7,338.2 1442.95,332.29 1452.21,316.54 1461.46,337.62 1470.72,330.67 1479.97,319.54 1489.23,321.5 1498.48,333.75 1507.74,313.88 1516.99,321.27 1526.25,309.1 1535.5,320.12" fill="none" stroke="#5f7b9f" stroke-width="1.300" stroke-linejoin="round"/><polyline points="1433.7,365.61 1442.95,358.05 1452.21,364.36 1461.46,370.75 1470.72,360.56 1479.97,372.21 1489.23,361.83 1498.48,347.1 1507.74,351.05 1516.99,349.72 1526.25,360.76 1535.5,376.2" fill="none" stroke="#5f7b9f" stroke-width="1.300" stroke-linejoin="round"/><polyline points="1433.7,411.82 1442.95,404.63 1452.21,398.28 1461.46,400.56 1470.72,408.41 1479.97,414.2 1489.23,410.16 1498.48,388.31 1507.74,392.99 1516.99,413.35 1526.25,398.46 1535.5,385.1" fill="none" stroke="#5f7b9f" stroke-width="1.300" stroke-linejoin="round"/><polyline points="1433.7,452.2 1442.95,436.11 1452.21,443.75 1461.46,431.6 1470.72,423.1 1479.97,440.18 1489.23,431.42 1498.48,437.4 1507.74,449.41 1516.99,449.66 1526.25,427.81 1535.5,445.97" fill="none" stroke="#5f7b9f" stroke-width="1.300" stroke-linejoin="round"/><polyline points="1433.7,461.1 1442.95,483.34 1452.21,470.43 1461.46,461.1 1470.72,469.74 1479.97,462.45 1489.23,466.41 1498.48,466.89 1507.74,471.07 1516.99,490.2 1526.25,476.72 1535.5,477.05" fill="none" stroke="#5f7b9f" stroke-width="1.300" stroke-linejoin="round"/></svg>
<svg class="a" style="left:0px;top:0px;" width="1600" height="595" viewBox="0 0 1600 595"><polyline points="1158.7,282.9 1167.77,288.86 1176.85,304.48 1185.92,292.44 1194.99,299.11 1204.06,294.28 1213.14,286.97 1222.21,304.07 1231.28,308 1240.35,278.7 1249.43,301.04 1258.5,281.45" fill="none" stroke="#17202e" stroke-width="1.9" stroke-linejoin="round" stroke-linecap="round"/><polyline points="1158.7,345.67 1167.77,339.72 1176.85,323.85 1185.92,345.08 1194.99,338.09 1204.06,326.88 1213.14,328.86 1222.21,341.19 1231.28,321.18 1240.35,328.62 1249.43,316.37 1258.5,327.46" fill="none" stroke="#17202e" stroke-width="1.9" stroke-linejoin="round" stroke-linecap="round"/><path d="M1150.7 311.67H1266" stroke="#5d7fb9" stroke-width="1"/><polyline points="1158.7,372.67 1167.77,365.06 1176.85,371.41 1185.92,377.85 1194.99,367.59 1204.06,379.32 1213.14,368.87 1222.21,354.03 1231.28,358.01 1240.35,356.67 1249.43,367.79 1258.5,383.33" fill="none" stroke="#17202e" stroke-width="1.9" stroke-linejoin="round" stroke-linecap="round"/><path d="M1150.7 349.33H1266" stroke="#5d7fb9" stroke-width="1"/><polyline points="1158.7,418.6 1167.77,411.36 1176.85,404.97 1185.92,407.27 1194.99,415.17 1204.06,421 1213.14,416.93 1222.21,394.93 1231.28,399.64 1240.35,420.15 1249.43,405.15 1258.5,391.7" fill="none" stroke="#17202e" stroke-width="1.9" stroke-linejoin="round" stroke-linecap="round"/><path d="M1150.7 387H1266" stroke="#5d7fb9" stroke-width="1"/><polyline points="1158.7,458.67 1167.77,442.47 1176.85,450.15 1185.92,437.92 1194.99,429.37 1204.06,446.57 1213.14,437.74 1222.21,443.76 1231.28,455.86 1240.35,456.11 1249.43,434.11 1258.5,452.39" fill="none" stroke="#17202e" stroke-width="1.9" stroke-linejoin="round" stroke-linecap="round"/><path d="M1150.7 424.67H1266" stroke="#5d7fb9" stroke-width="1"/><polyline points="1158.7,467.04 1167.77,489.42 1176.85,476.43 1185.92,467.03 1194.99,475.73 1204.06,468.4 1213.14,472.38 1222.21,472.86 1231.28,477.07 1240.35,496.33 1249.43,482.76 1258.5,483.1" fill="none" stroke="#17202e" stroke-width="1.9" stroke-linejoin="round" stroke-linecap="round"/><path d="M1150.7 462.33H1266" stroke="#5d7fb9" stroke-width="1"/><rect x="1150.7" y="274" width="115.3" height="226" fill="none" stroke="#5d7fb9" stroke-width="1.1"/></svg>
<svg class="a" style="left:0px;top:0px;" width="1600" height="595" viewBox="0 0 1600 595"><circle cx="1150.7" cy="273.2" r="4.2" fill="#fff" stroke="#8a8a8a" stroke-width="1.2"/><circle cx="1150.7" cy="387.8" r="4.2" fill="#fff" stroke="#8a8a8a" stroke-width="1.2"/><circle cx="1150.7" cy="501.8" r="4.2" fill="#fff" stroke="#8a8a8a" stroke-width="1.2"/><circle cx="1209.4" cy="273.2" r="4.2" fill="#fff" stroke="#8a8a8a" stroke-width="1.2"/><circle cx="1209.4" cy="501.8" r="4.2" fill="#fff" stroke="#8a8a8a" stroke-width="1.2"/><circle cx="1267" cy="273.2" r="4.2" fill="#fff" stroke="#8a8a8a" stroke-width="1.2"/><circle cx="1267" cy="387.8" r="4.2" fill="#fff" stroke="#8a8a8a" stroke-width="1.2"/><circle cx="1267" cy="501.8" r="4.2" fill="#fff" stroke="#8a8a8a" stroke-width="1.2"/></svg>
<svg class="a" style="left:1537.2px;top:489px;" width="6" height="6" viewBox="0 0 6 6"><path d="M5 1v4H1z" fill="#2f4c9e"/></svg>
<div class="a" style="left:1579.6px;top:229.6px;width:18.8px;height:315.1px;background:#f0f0f0;"></div>
<svg class="a" style="left:1583.6px;top:233.6px;" width="13" height="9" viewBox="0 0 13 9"><path d="M6.400 1.600L10.800 7.200H2z" fill="#6a6a6a"/></svg>
<svg class="a" style="left:1583.6px;top:535.6px;" width="13" height="9" viewBox="0 0 13 9"><path d="M6.400 7.400L10.800 1.800H2z" fill="#6a6a6a"/></svg>
<div class="a" style="left:1586px;top:247px;width:7.8px;height:140px;background:#727272;border-radius:4px;"></div>
<div class="a" style="left:1px;top:544.7px;width:1597.8px;height:29.6px;background:#eeeeee;"></div>
<div class="a" style="left:1px;top:574.3px;width:1597.8px;height:19.2px;background:#f3f3f3;border-radius:0 0 7px 5px;"></div>
<div class="a" style="left:106px;top:544.7px;width:51.6px;height:25.4px;background:#fff;border-radius:0 0 6px 6px;box-shadow:0 1px 2px rgba(0,0,0,.12);"></div>
<span class="t" style="top:551.18px;font-size:11.6px;line-height:11.6px;color:#2c3a31;font-weight:700;-webkit-text-stroke:0;left:113.4px;transform-origin:0 0;transform:scaleX(0.973);">Sheet1</span>
<div class="a" style="left:113.2px;top:565.8px;width:37.4px;height:1.8px;background:#107c41;border-radius:1px;"></div>
<div class="a" style="left:160.8px;top:552px;width:1px;height:16px;background:#c8c8c8;"></div>
<svg class="a" style="left:25.6px;top:554.6px;" width="8" height="10" viewBox="0 0 8 10"><path d="M6.6 1L1.4 4.9L6.6 8.800" fill="none" stroke="#c2c2c2" stroke-width="1.2"/></svg>
<svg class="a" style="left:55.6px;top:554.6px;" width="8" height="10" viewBox="0 0 8 10"><path d="M1.4 1L6.600 4.9L1.4 8.800" fill="none" stroke="#c2c2c2" stroke-width="1.2"/></svg>
<div class="a" style="left:200.6px;top:558.85px;width:9px;height:1.1px;background:#555;"></div>
<div class="a" style="left:204.55px;top:554.9px;width:1.1px;height:9px;background:#555;"></div>
<div class="a" style="left:961.4px;top:555.3px;width:1.4px;height:1.4px;background:#9a9a9a;border-radius:50%;"></div>
<div class="a" style="left:961.4px;top:559.3px;width:1.4px;height:1.4px;background:#9a9a9a;border-radius:50%;"></div>
<div class="a" style="left:961.4px;top:563.1px;width:1.4px;height:1.4px;background:#9a9a9a;border-radius:50%;"></div>
<svg class="a" style="left:979.8px;top:554.6px;" width="9" height="11" viewBox="0 0 9 11"><path d="M7.6 1v8.800L1 5.400z" fill="#6a6a6a"/></svg>
<svg class="a" style="left:1570px;top:554.6px;" width="9" height="11" viewBox="0 0 9 11"><path d="M1.400 1v8.800L8 5.400z" fill="#6a6a6a"/></svg>
<div class="a" style="left:992px;top:556px;width:540.500px;height:8px;background:#6f6f6f;border-radius:4px;"></div>
<div class="a" style="left:1px;top:573.8px;width:1597.8px;height:1px;background:#d2d2d2;"></div>
<span class="t" style="top:578.97px;font-size:10.2px;line-height:10.2px;color:#333;left:7.5px;transform-origin:0 0;transform:scaleX(0.943);">Ready</span>
<svg class="a" style="left:53px;top:578.6px;" width="14" height="12" viewBox="0 0 14 12"><rect x=".6" y=".6" width="11.6" height="9.6" fill="none" stroke="#444" stroke-width="1"/><path d="M.6 3h11.6M3.4 3v7.200M.8 5.400h2.600M.8 7.800h2.600" stroke="#444" stroke-width=".9"/><circle cx="9" cy="7.800" r="3" fill="#f0f0f0" stroke="#444" stroke-width="1"/><circle cx="9" cy="7.800" r="1.100" fill="#444"/></svg>
<svg class="a" style="left:81px;top:578px;" width="15" height="13" viewBox="0 0 15 13"><path d="M6.4 1.600A4.800 4.800 0 1 0 8.800 10.400" fill="none" stroke="#444" stroke-width="1.100"/><path d="M6.400 .600v4.800h2.400" fill="none" stroke="#444" stroke-width="1"/><circle cx="10.600" cy="5.400" r="1" fill="#444"/><path d="M8.600 8l4.800 4.400M13.400 8l-4.800 4.400" stroke="#444" stroke-width="1"/></svg>
<span class="t" style="top:578.97px;font-size:10.2px;line-height:10.2px;color:#333;left:98.8px;transform-origin:0 0;">Accessibility: Investigate</span>
<div class="a" style="left:1318px;top:575px;width:35.6px;height:18.6px;background:#dadada;"></div>
<svg class="a" style="left:1329.4px;top:577px;" width="13" height="13" viewBox="0 0 13 13"><rect x=".6" y=".6" width="11.400" height="11.400" fill="none" stroke="#333" stroke-width="1.100"/><path d="M4.400 .6v11.400M8.200 .6v11.400M.6 4.400h11.400M.6 8.200h11.400" stroke="#333" stroke-width="1"/></svg>
<svg class="a" style="left:1365.6px;top:577px;" width="13" height="13" viewBox="0 0 13 13"><rect x=".6" y=".6" width="11.400" height="11.400" fill="none" stroke="#444" stroke-width="1.100"/><rect x="3.200" y="3.200" width="6.200" height="6.200" fill="none" stroke="#444" stroke-width="1"/><path d="M4.600 5.400h3.400M4.600 7.400h3.400" stroke="#444" stroke-width=".8"/></svg>
<svg class="a" style="left:1401.4px;top:577px;" width="13" height="13" viewBox="0 0 13 13"><rect x=".6" y=".6" width="11.400" height="11.400" fill="none" stroke="#444" stroke-width="1.100"/><path d="M3.600 .6v5.400h5.600V.6" fill="none" stroke="#444" stroke-width="1"/></svg>
<div class="a" style="left:1431.6px;top:583.15px;width:6.2px;height:1.1px;background:#444;"></div>
<div class="a" style="left:1443px;top:583.2px;width:90px;height:1px;background:#c8c8c8;"></div>
<div class="a" style="left:1487px;top:579.2px;width:5px;height:10.2px;background:#686868;border-radius:1px;"></div>
<div class="a" style="left:1537.4px;top:583.15px;width:7.6px;height:1.1px;background:#444;"></div>
<div class="a" style="left:1540.65px;top:579.9px;width:1.1px;height:7.6px;background:#444;"></div>
<span class="t" style="top:579.37px;font-size:10.2px;line-height:10.2px;color:#333;left:1558.4px;transform-origin:0 0;transform:scaleX(0.893);">100%</span>
<div class="a" style="left:351.3px;top:133.4px;width:156.6px;height:259px;background:#fff;border:1px solid #d0d0d0;border-radius:4px;box-sizing:border-box;box-shadow:0 2px 5px rgba(0,0,0,.13);"></div>
<svg class="a" style="left:361px;top:137.4px;" width="21" height="21" viewBox="0 0 21 21"><rect x="2" y="1.900" width="16.200" height="16.200" fill="#fff" stroke="#a6a6a6" stroke-width="1.700"/></svg>
<span class="t" style="top:141.91px;font-size:10.5px;line-height:10.5px;color:#666;left:386px;transform-origin:0 0;transform:scaleX(1.092);"><u>A</u>utomatic</span>
<div class="a" style="left:352px;top:160.5px;width:155.4px;height:1px;background:#e2e2e2;"></div>
<span class="t" style="top:170.51px;font-size:10.5px;line-height:10.5px;color:#222;font-weight:700;-webkit-text-stroke:0;left:365px;transform-origin:0 0;transform:scaleX(0.980);">Theme Colors</span>
<div class="a" style="left:355.6px;top:191.5px;width:10.2px;height:10.2px;background:#ffffff;box-shadow:inset 0 0 0 .6px #e4e4e4;"></div>
<div class="a" style="left:355.6px;top:214.6px;width:10.2px;height:11.54px;background:#f2f2f2;"></div>
<div class="a" style="left:355.6px;top:226.04px;width:10.2px;height:11.54px;background:#d9d9d9;"></div>
<div class="a" style="left:355.6px;top:237.48px;width:10.2px;height:11.54px;background:#bfbfbf;"></div>
<div class="a" style="left:355.6px;top:248.92px;width:10.2px;height:11.54px;background:#a6a6a6;"></div>
<div class="a" style="left:355.6px;top:260.36px;width:10.2px;height:11.54px;background:#808080;"></div>
<div class="a" style="left:370.9px;top:191.5px;width:10.2px;height:10.2px;background:#000000;"></div>
<div class="a" style="left:370.9px;top:214.6px;width:10.2px;height:11.54px;background:#808080;"></div>
<div class="a" style="left:370.9px;top:226.04px;width:10.2px;height:11.54px;background:#595959;"></div>
<div class="a" style="left:370.9px;top:237.48px;width:10.2px;height:11.54px;background:#404040;"></div>
<div class="a" style="left:370.9px;top:248.92px;width:10.2px;height:11.54px;background:#262626;"></div>
<div class="a" style="left:370.9px;top:260.36px;width:10.2px;height:11.54px;background:#0d0d0d;"></div>
<div class="a" style="left:386.2px;top:191.5px;width:10.2px;height:10.2px;background:#e7e6e6;"></div>
<div class="a" style="left:386.2px;top:214.6px;width:10.2px;height:11.54px;background:#d0cece;"></div>
<div class="a" style="left:386.2px;top:226.04px;width:10.2px;height:11.54px;background:#aeaaaa;"></div>
<div class="a" style="left:386.2px;top:237.48px;width:10.2px;height:11.54px;background:#757171;"></div>
<div class="a" style="left:386.2px;top:248.92px;width:10.2px;height:11.54px;background:#3a3838;"></div>
<div class="a" style="left:386.2px;top:260.36px;width:10.2px;height:11.54px;background:#161616;"></div>
<div class="a" style="left:401.5px;top:191.5px;width:10.2px;height:10.2px;background:#44546a;"></div>
<div class="a" style="left:401.5px;top:214.6px;width:10.2px;height:11.54px;background:#d6dce4;"></div>
<div class="a" style="left:401.5px;top:226.04px;width:10.2px;height:11.54px;background:#acb9ca;"></div>
<div class="a" style="left:401.5px;top:237.48px;width:10.2px;height:11.54px;background:#8497b0;"></div>
<div class="a" style="left:401.5px;top:248.92px;width:10.2px;height:11.54px;background:#333f4f;"></div>
<div class="a" style="left:401.5px;top:260.36px;width:10.2px;height:11.54px;background:#222b35;"></div>
<div class="a" style="left:416.8px;top:191.5px;width:10.2px;height:10.2px;background:#4472c4;"></div>
<div class="a" style="left:416.8px;top:214.6px;width:10.2px;height:11.54px;background:#d9e1f2;"></div>
<div class="a" style="left:416.8px;top:226.04px;width:10.2px;height:11.54px;background:#b4c6e7;"></div>
<div class="a" style="left:416.8px;top:237.48px;width:10.2px;height:11.54px;background:#8ea9db;"></div>
<div class="a" style="left:416.8px;top:248.92px;width:10.2px;height:11.54px;background:#305496;"></div>
<div class="a" style="left:416.8px;top:260.36px;width:10.2px;height:11.54px;background:#203764;"></div>
<div class="a" style="left:432.1px;top:191.5px;width:10.2px;height:10.2px;background:#ed7d31;"></div>
<div class="a" style="left:432.1px;top:214.6px;width:10.2px;height:11.54px;background:#fce4d6;"></div>
<div class="a" style="left:432.1px;top:226.04px;width:10.2px;height:11.54px;background:#f8cbad;"></div>
<div class="a" style="left:432.1px;top:237.48px;width:10.2px;height:11.54px;background:#f4b084;"></div>
<div class="a" style="left:432.1px;top:248.92px;width:10.2px;height:11.54px;background:#c65911;"></div>
<div class="a" style="left:432.1px;top:260.36px;width:10.2px;height:11.54px;background:#833c0c;"></div>
<div class="a" style="left:447.4px;top:191.5px;width:10.2px;height:10.2px;background:#a5a5a5;"></div>
<div class="a" style="left:447.4px;top:214.6px;width:10.2px;height:11.54px;background:#ededed;"></div>
<div class="a" style="left:447.4px;top:226.04px;width:10.2px;height:11.54px;background:#dbdbdb;"></div>
<div class="a" style="left:447.4px;top:237.48px;width:10.2px;height:11.54px;background:#c9c9c9;"></div>
<div class="a" style="left:447.4px;top:248.92px;width:10.2px;height:11.54px;background:#7b7b7b;"></div>
<div class="a" style="left:447.4px;top:260.36px;width:10.2px;height:11.54px;background:#525252;"></div>
<div class="a" style="left:462.7px;top:191.5px;width:10.2px;height:10.2px;background:#ffc000;"></div>
<div class="a" style="left:462.7px;top:214.6px;width:10.2px;height:11.54px;background:#fff2cc;"></div>
<div class="a" style="left:462.7px;top:226.04px;width:10.2px;height:11.54px;background:#ffe699;"></div>
<div class="a" style="left:462.7px;top:237.48px;width:10.2px;height:11.54px;background:#ffd966;"></div>
<div class="a" style="left:462.7px;top:248.92px;width:10.2px;height:11.54px;background:#bf8f00;"></div>
<div class="a" style="left:462.7px;top:260.36px;width:10.2px;height:11.54px;background:#806000;"></div>
<div class="a" style="left:478px;top:191.5px;width:10.2px;height:10.2px;background:#5b9bd5;"></div>
<div class="a" style="left:478px;top:214.6px;width:10.2px;height:11.54px;background:#ddebf7;"></div>
<div class="a" style="left:478px;top:226.04px;width:10.2px;height:11.54px;background:#bdd7ee;"></div>
<div class="a" style="left:478px;top:237.48px;width:10.2px;height:11.54px;background:#9bc2e6;"></div>
<div class="a" style="left:478px;top:248.92px;width:10.2px;height:11.54px;background:#2f75b5;"></div>
<div class="a" style="left:478px;top:260.36px;width:10.2px;height:11.54px;background:#1f4e78;"></div>
<div class="a" style="left:493.3px;top:191.5px;width:10.2px;height:10.2px;background:#70ad47;"></div>
<div class="a" style="left:493.3px;top:214.6px;width:10.2px;height:11.54px;background:#e2efda;"></div>
<div class="a" style="left:493.3px;top:226.04px;width:10.2px;height:11.54px;background:#c6e0b4;"></div>
<div class="a" style="left:493.3px;top:237.48px;width:10.2px;height:11.54px;background:#a9d08e;"></div>
<div class="a" style="left:493.3px;top:248.92px;width:10.2px;height:11.54px;background:#548235;"></div>
<div class="a" style="left:493.3px;top:260.36px;width:10.2px;height:11.54px;background:#375623;"></div>
<div class="a" style="left:352px;top:283.9px;width:155.4px;height:1px;background:#e2e2e2;"></div>
<span class="t" style="top:293.91px;font-size:10.5px;line-height:10.5px;color:#222;font-weight:700;-webkit-text-stroke:0;left:364.6px;transform-origin:0 0;transform:scaleX(0.967);">Standard Colors</span>
<div class="a" style="left:355.6px;top:314.7px;width:10.2px;height:10.2px;background:#c00000;"></div>
<div class="a" style="left:370.9px;top:314.7px;width:10.2px;height:10.2px;background:#ff0000;"></div>
<div class="a" style="left:386.2px;top:314.7px;width:10.2px;height:10.2px;background:#ffc000;"></div>
<div class="a" style="left:401.5px;top:314.7px;width:10.2px;height:10.2px;background:#ffff00;"></div>
<div class="a" style="left:416.8px;top:314.7px;width:10.2px;height:10.2px;background:#92d050;"></div>
<div class="a" style="left:432.1px;top:314.7px;width:10.2px;height:10.2px;background:#00b050;"></div>
<div class="a" style="left:447.4px;top:314.7px;width:10.2px;height:10.2px;background:#00b0f0;"></div>
<div class="a" style="left:462.7px;top:314.7px;width:10.2px;height:10.2px;background:#0070c0;"></div>
<div class="a" style="left:478px;top:314.7px;width:10.2px;height:10.2px;background:#002060;"></div>
<div class="a" style="left:493.3px;top:314.7px;width:10.2px;height:10.2px;background:#7030a0;"></div>
<div class="a" style="left:353px;top:337.3px;width:150.4px;height:24.5px;background:#c6c6c6;"></div>
<div class="a" style="left:364.5px;top:342.9px;width:13.4px;height:13.2px;background:#c9c9c9;border:1px solid #dadada;box-sizing:border-box;"></div>
<span class="t" style="top:344.11px;font-size:10.5px;line-height:10.5px;color:#333;left:386px;transform-origin:0 0;transform:scaleX(1.042);"><u>N</u>o Fill</span>
<svg class="a" style="left:362px;top:371px;" width="16" height="15" viewBox="0 0 16 15"><circle cx="7" cy="7" r="5.600" fill="none" stroke="#888" stroke-width="1"/></svg>
<span class="t" style="top:373.11px;font-size:10.5px;line-height:10.5px;color:#333;left:386px;transform-origin:0 0;transform:scaleX(1.022);">More Colors...</span>
<div class="a" style="left:366.4px;top:371.2px;width:39.8px;height:20.200px;background:#fff;border:1px solid #cfcfcf;border-radius:3px;box-sizing:border-box;"></div>
<span class="t" style="top:376.37px;font-size:10.2px;line-height:10.2px;color:#6a6a6a;left:371.2px;transform-origin:0 0;transform:scaleX(1.045);">No Fill</span>
<svg class="a" style="left:0;top:0;pointer-events:none" width="1600" height="595"><rect x="56.7" y="45.6" width="45.8" height="25.8" fill="none" stroke="#db4046" stroke-width="2.8"/></svg>
<svg class="a" style="left:0;top:0;pointer-events:none" width="1600" height="595"><rect x="349.25" y="112.85" width="38" height="19.5" fill="none" stroke="#db4046" stroke-width="3.1"/></svg>
<svg class="a" style="left:0;top:0;pointer-events:none" width="1600" height="595"><rect x="724.6" y="161.6" width="73.8" height="31" fill="none" stroke="#db4046" stroke-width="2.8"/></svg>
<svg class="a" style="left:0;top:0;pointer-events:none" width="1600" height="595"><rect x="1084.65" y="236.55" width="471.5" height="265" fill="none" stroke="#db4046" stroke-width="2.9"/></svg>
<svg class="a" style="left:0;top:0;pointer-events:none" width="1600" height="595"><rect x="345.6" y="332" width="159.4" height="60" fill="none" stroke="#db4046" stroke-width="2.8"/></svg>
</body></html>
